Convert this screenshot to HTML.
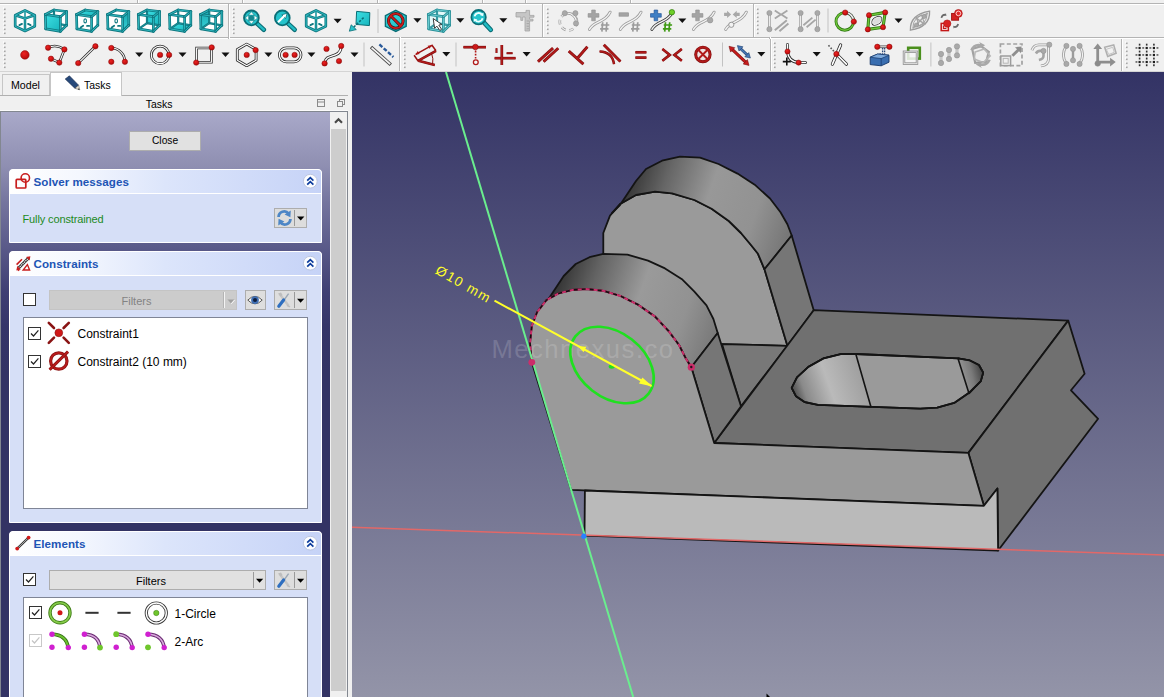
<!DOCTYPE html>
<html>
<head>
<meta charset="utf-8">
<title>FreeCAD</title>
<style>
html,body{margin:0;padding:0;}
body{width:1164px;height:697px;overflow:hidden;background:#f0f0f0;font-family:"Liberation Sans",sans-serif;font-size:12px;color:#000;position:relative;}
.abs{position:absolute;}
#tb1{position:absolute;left:0;top:0;width:1164px;height:38px;background:#f0f0f0;}
#tb2{position:absolute;left:0;top:38px;width:1164px;height:34px;background:#f0f0f0;}
#view{position:absolute;left:352px;top:72px;width:812px;height:625px;background:linear-gradient(to bottom,#333365 0%,#9394a8 100%);overflow:hidden;}
#panel{position:absolute;left:0;top:111px;width:348px;height:586px;background:#f0f0f0;}
#taskbg{position:absolute;left:1px;top:112px;width:329px;height:585px;background:linear-gradient(to bottom,#a9a9c9 0px,#8e8eb1 55px,#75759e 90px,#5a5a89 135px,#3f3f73 180px,#353568 215px,#333364 260px,#333364 100%);}
.grp{position:absolute;left:9px;width:313px;background:#d6dff7;border-radius:4px 4px 0 0;box-sizing:border-box;border:1px solid #fff;}
.grphead{position:absolute;left:-1px;top:-1px;width:313px;height:25px;box-sizing:border-box;border-radius:4px 4px 0 0;border:1px solid #fff;background:linear-gradient(to right,#ffffff 0%,#f4f7fe 22%,#dce5fb 50%,#c6d3f7 100%);}
.grphead .t{position:absolute;left:23.500px;top:5px;font-weight:bold;font-size:11.600px;letter-spacing:0.050px;color:#2154b5;white-space:nowrap;}
.lbl{font-size:11px;white-space:nowrap;}
.sx{display:inline-block;transform-origin:50% 50%;}
.list{position:absolute;background:#fff;border:1px solid #7f8596;}
.btn{position:absolute;background:#e1e1e1;border:1px solid #adadad;box-sizing:border-box;}
.cb{position:absolute;width:11px;height:11px;border:1px solid #333;background:#fff;}
</style>
</head>
<body>
<div id="tb1"></div>
<div id="tb2"></div>
<svg id="toolbar" class="abs" style="left:0;top:0;" width="1164" height="72">
<rect x="0" y="3" width="1164" height="1" fill="#b4b4b4"/><rect x="0" y="4" width="1164" height="1" fill="#ffffff"/>
<rect x="137" y="0" width="1" height="3" fill="#b4b4b4"/><rect x="138" y="0" width="1" height="3" fill="#ffffff"/>
<rect x="242" y="0" width="1" height="3" fill="#b4b4b4"/><rect x="243" y="0" width="1" height="3" fill="#ffffff"/>
<rect x="377" y="0" width="1" height="3" fill="#b4b4b4"/><rect x="378" y="0" width="1" height="3" fill="#ffffff"/>
<rect x="482" y="0" width="1" height="3" fill="#b4b4b4"/><rect x="483" y="0" width="1" height="3" fill="#ffffff"/>
<rect x="525" y="0" width="1" height="3" fill="#b4b4b4"/><rect x="526" y="0" width="1" height="3" fill="#ffffff"/>
<rect x="630" y="0" width="1" height="3" fill="#b4b4b4"/><rect x="631" y="0" width="1" height="3" fill="#ffffff"/>
<rect x="0" y="37" width="1164" height="1" fill="#b4b4b4"/><rect x="0" y="38" width="1164" height="1" fill="#ffffff"/>
<rect x="228" y="37" width="1" height="2" fill="#b4b4b4"/><rect x="229" y="37" width="1" height="2" fill="#ffffff"/>
<rect x="399" y="37" width="1" height="2" fill="#b4b4b4"/><rect x="400" y="37" width="1" height="2" fill="#ffffff"/>
<rect x="769" y="37" width="1" height="2" fill="#b4b4b4"/><rect x="770" y="37" width="1" height="2" fill="#ffffff"/>
<rect x="0" y="71" width="1164" height="1" fill="#d4d4d4"/>
<rect x="228" y="4" width="1" height="33" fill="#b4b4b4"/><rect x="229" y="4" width="1" height="33" fill="#ffffff"/>
<rect x="542" y="4" width="1" height="33" fill="#b4b4b4"/><rect x="543" y="4" width="1" height="33" fill="#ffffff"/>
<rect x="753" y="4" width="1" height="33" fill="#b4b4b4"/><rect x="754" y="4" width="1" height="33" fill="#ffffff"/>
<rect x="377.5" y="9" width="1" height="24" fill="#c2c2c2"/>
<rect x="399" y="39" width="1" height="32" fill="#b4b4b4"/><rect x="400" y="39" width="1" height="32" fill="#ffffff"/>
<rect x="770" y="39" width="1" height="32" fill="#b4b4b4"/><rect x="771" y="39" width="1" height="32" fill="#ffffff"/>
<rect x="1121" y="39" width="1" height="32" fill="#b4b4b4"/><rect x="1122" y="39" width="1" height="32" fill="#ffffff"/>
<rect x="4" y="8.5" width="1.6" height="1.6" fill="#a6a6a6"/><rect x="3" y="7.5" width="1.2" height="1.2" fill="#ffffff"/>
<rect x="4" y="12.5" width="1.6" height="1.6" fill="#a6a6a6"/><rect x="3" y="11.5" width="1.2" height="1.2" fill="#ffffff"/>
<rect x="4" y="16.5" width="1.6" height="1.6" fill="#a6a6a6"/><rect x="3" y="15.5" width="1.2" height="1.2" fill="#ffffff"/>
<rect x="4" y="20.5" width="1.6" height="1.6" fill="#a6a6a6"/><rect x="3" y="19.5" width="1.2" height="1.2" fill="#ffffff"/>
<rect x="4" y="24.5" width="1.6" height="1.6" fill="#a6a6a6"/><rect x="3" y="23.5" width="1.2" height="1.2" fill="#ffffff"/>
<rect x="4" y="28.5" width="1.6" height="1.6" fill="#a6a6a6"/><rect x="3" y="27.5" width="1.2" height="1.2" fill="#ffffff"/>
<rect x="4" y="32.5" width="1.6" height="1.6" fill="#a6a6a6"/><rect x="3" y="31.5" width="1.2" height="1.2" fill="#ffffff"/>
<rect x="233" y="8.5" width="1.6" height="1.6" fill="#a6a6a6"/><rect x="232" y="7.5" width="1.2" height="1.2" fill="#ffffff"/>
<rect x="233" y="12.5" width="1.6" height="1.6" fill="#a6a6a6"/><rect x="232" y="11.5" width="1.2" height="1.2" fill="#ffffff"/>
<rect x="233" y="16.5" width="1.6" height="1.6" fill="#a6a6a6"/><rect x="232" y="15.5" width="1.2" height="1.2" fill="#ffffff"/>
<rect x="233" y="20.5" width="1.6" height="1.6" fill="#a6a6a6"/><rect x="232" y="19.5" width="1.2" height="1.2" fill="#ffffff"/>
<rect x="233" y="24.5" width="1.6" height="1.6" fill="#a6a6a6"/><rect x="232" y="23.5" width="1.2" height="1.2" fill="#ffffff"/>
<rect x="233" y="28.5" width="1.6" height="1.6" fill="#a6a6a6"/><rect x="232" y="27.5" width="1.2" height="1.2" fill="#ffffff"/>
<rect x="233" y="32.5" width="1.6" height="1.6" fill="#a6a6a6"/><rect x="232" y="31.5" width="1.2" height="1.2" fill="#ffffff"/>
<rect x="547" y="8.5" width="1.6" height="1.6" fill="#a6a6a6"/><rect x="546" y="7.5" width="1.2" height="1.2" fill="#ffffff"/>
<rect x="547" y="12.5" width="1.6" height="1.6" fill="#a6a6a6"/><rect x="546" y="11.5" width="1.2" height="1.2" fill="#ffffff"/>
<rect x="547" y="16.5" width="1.6" height="1.6" fill="#a6a6a6"/><rect x="546" y="15.5" width="1.2" height="1.2" fill="#ffffff"/>
<rect x="547" y="20.5" width="1.6" height="1.6" fill="#a6a6a6"/><rect x="546" y="19.5" width="1.2" height="1.2" fill="#ffffff"/>
<rect x="547" y="24.5" width="1.6" height="1.6" fill="#a6a6a6"/><rect x="546" y="23.5" width="1.2" height="1.2" fill="#ffffff"/>
<rect x="547" y="28.5" width="1.6" height="1.6" fill="#a6a6a6"/><rect x="546" y="27.5" width="1.2" height="1.2" fill="#ffffff"/>
<rect x="547" y="32.5" width="1.6" height="1.6" fill="#a6a6a6"/><rect x="546" y="31.5" width="1.2" height="1.2" fill="#ffffff"/>
<rect x="757" y="8.5" width="1.6" height="1.6" fill="#a6a6a6"/><rect x="756" y="7.5" width="1.2" height="1.2" fill="#ffffff"/>
<rect x="757" y="12.5" width="1.6" height="1.6" fill="#a6a6a6"/><rect x="756" y="11.5" width="1.2" height="1.2" fill="#ffffff"/>
<rect x="757" y="16.5" width="1.6" height="1.6" fill="#a6a6a6"/><rect x="756" y="15.5" width="1.2" height="1.2" fill="#ffffff"/>
<rect x="757" y="20.5" width="1.6" height="1.6" fill="#a6a6a6"/><rect x="756" y="19.5" width="1.2" height="1.2" fill="#ffffff"/>
<rect x="757" y="24.5" width="1.6" height="1.6" fill="#a6a6a6"/><rect x="756" y="23.5" width="1.2" height="1.2" fill="#ffffff"/>
<rect x="757" y="28.5" width="1.6" height="1.6" fill="#a6a6a6"/><rect x="756" y="27.5" width="1.2" height="1.2" fill="#ffffff"/>
<rect x="757" y="32.5" width="1.6" height="1.6" fill="#a6a6a6"/><rect x="756" y="31.5" width="1.2" height="1.2" fill="#ffffff"/>
<rect x="4" y="42.5" width="1.6" height="1.6" fill="#a6a6a6"/><rect x="3" y="41.5" width="1.2" height="1.2" fill="#ffffff"/>
<rect x="4" y="46.5" width="1.6" height="1.6" fill="#a6a6a6"/><rect x="3" y="45.5" width="1.2" height="1.2" fill="#ffffff"/>
<rect x="4" y="50.5" width="1.6" height="1.6" fill="#a6a6a6"/><rect x="3" y="49.5" width="1.2" height="1.2" fill="#ffffff"/>
<rect x="4" y="54.5" width="1.6" height="1.6" fill="#a6a6a6"/><rect x="3" y="53.5" width="1.2" height="1.2" fill="#ffffff"/>
<rect x="4" y="58.5" width="1.6" height="1.6" fill="#a6a6a6"/><rect x="3" y="57.5" width="1.2" height="1.2" fill="#ffffff"/>
<rect x="4" y="62.5" width="1.6" height="1.6" fill="#a6a6a6"/><rect x="3" y="61.5" width="1.2" height="1.2" fill="#ffffff"/>
<rect x="4" y="66.5" width="1.6" height="1.6" fill="#a6a6a6"/><rect x="3" y="65.5" width="1.2" height="1.2" fill="#ffffff"/>
<rect x="404" y="42.5" width="1.6" height="1.6" fill="#a6a6a6"/><rect x="403" y="41.5" width="1.2" height="1.2" fill="#ffffff"/>
<rect x="404" y="46.5" width="1.6" height="1.6" fill="#a6a6a6"/><rect x="403" y="45.5" width="1.2" height="1.2" fill="#ffffff"/>
<rect x="404" y="50.5" width="1.6" height="1.6" fill="#a6a6a6"/><rect x="403" y="49.5" width="1.2" height="1.2" fill="#ffffff"/>
<rect x="404" y="54.5" width="1.6" height="1.6" fill="#a6a6a6"/><rect x="403" y="53.5" width="1.2" height="1.2" fill="#ffffff"/>
<rect x="404" y="58.5" width="1.6" height="1.6" fill="#a6a6a6"/><rect x="403" y="57.5" width="1.2" height="1.2" fill="#ffffff"/>
<rect x="404" y="62.5" width="1.6" height="1.6" fill="#a6a6a6"/><rect x="403" y="61.5" width="1.2" height="1.2" fill="#ffffff"/>
<rect x="404" y="66.5" width="1.6" height="1.6" fill="#a6a6a6"/><rect x="403" y="65.5" width="1.2" height="1.2" fill="#ffffff"/>
<rect x="774" y="42.5" width="1.6" height="1.6" fill="#a6a6a6"/><rect x="773" y="41.5" width="1.2" height="1.2" fill="#ffffff"/>
<rect x="774" y="46.5" width="1.6" height="1.6" fill="#a6a6a6"/><rect x="773" y="45.5" width="1.2" height="1.2" fill="#ffffff"/>
<rect x="774" y="50.5" width="1.6" height="1.6" fill="#a6a6a6"/><rect x="773" y="49.5" width="1.2" height="1.2" fill="#ffffff"/>
<rect x="774" y="54.5" width="1.6" height="1.6" fill="#a6a6a6"/><rect x="773" y="53.5" width="1.2" height="1.2" fill="#ffffff"/>
<rect x="774" y="58.5" width="1.6" height="1.6" fill="#a6a6a6"/><rect x="773" y="57.5" width="1.2" height="1.2" fill="#ffffff"/>
<rect x="774" y="62.5" width="1.6" height="1.6" fill="#a6a6a6"/><rect x="773" y="61.5" width="1.2" height="1.2" fill="#ffffff"/>
<rect x="774" y="66.5" width="1.6" height="1.6" fill="#a6a6a6"/><rect x="773" y="65.5" width="1.2" height="1.2" fill="#ffffff"/>
<rect x="1126" y="42.5" width="1.6" height="1.6" fill="#a6a6a6"/><rect x="1125" y="41.5" width="1.2" height="1.2" fill="#ffffff"/>
<rect x="1126" y="46.5" width="1.6" height="1.6" fill="#a6a6a6"/><rect x="1125" y="45.5" width="1.2" height="1.2" fill="#ffffff"/>
<rect x="1126" y="50.5" width="1.6" height="1.6" fill="#a6a6a6"/><rect x="1125" y="49.5" width="1.2" height="1.2" fill="#ffffff"/>
<rect x="1126" y="54.5" width="1.6" height="1.6" fill="#a6a6a6"/><rect x="1125" y="53.5" width="1.2" height="1.2" fill="#ffffff"/>
<rect x="1126" y="58.5" width="1.6" height="1.6" fill="#a6a6a6"/><rect x="1125" y="57.5" width="1.2" height="1.2" fill="#ffffff"/>
<rect x="1126" y="62.5" width="1.6" height="1.6" fill="#a6a6a6"/><rect x="1125" y="61.5" width="1.2" height="1.2" fill="#ffffff"/>
<rect x="1126" y="66.5" width="1.6" height="1.6" fill="#a6a6a6"/><rect x="1125" y="65.5" width="1.2" height="1.2" fill="#ffffff"/>
<defs><linearGradient id="cy" x1="0" y1="0" x2="1" y2="1"><stop offset="0" stop-color="#3fe0e4"/><stop offset="1" stop-color="#16b4bc"/></linearGradient><linearGradient id="cy2" x1="0" y1="0" x2="0" y2="1"><stop offset="0" stop-color="#1aa6ae"/><stop offset="1" stop-color="#36d2d8"/></linearGradient><radialGradient id="rd" cx="0.4" cy="0.35" r="0.7"><stop offset="0" stop-color="#ee2222"/><stop offset="1" stop-color="#b00808"/></radialGradient></defs>
<polygon points="25.0,10.4 34.8,15.3 34.8,26.3 25.0,31.0 15.2,26.3 15.2,15.3" fill="#ffffff" stroke="#0f7880" stroke-width="2.700" stroke-linejoin="round"/>
<path d="M15.2,15.299999999999999 L25,18.5 L34.8,15.299999999999999 M25,18.5 L25,31.0" fill="none" stroke="#0f7880" stroke-width="2.500"/>
<path d="M25,10.399999999999999 L25,18.5" fill="none" stroke="#1c98a0" stroke-width="1.600"/>
<polygon points="25.0,10.4 34.8,15.3 34.8,26.3 25.0,31.0 15.2,26.3 15.2,15.3" fill="none" stroke="#36c6ce" stroke-width="0.800" stroke-linejoin="round"/>
<path d="M15.2,15.299999999999999 L25,18.5 L34.8,15.299999999999999 M25,18.5 L25,31.0" fill="none" stroke="#36c6ce" stroke-width="0.700"/>
<path d="M19.4,25.1 l2.600,-1.200 M28,23.9 l2.600,1.200" stroke="#0f7880" stroke-width="1.800" stroke-linecap="round"/>
<polygon points="45.3,14.5 54.0,10.0 66.6,11.5 66.6,25.3 60.4,31.3 45.7,28.8" fill="#ffffff" stroke="#0b6e76" stroke-width="0" stroke-linejoin="round" />
<line x1="54.0" y1="10.0" x2="54.0" y2="23.1" stroke="#0f7880" stroke-width="2.2" stroke-linecap="round"/>
<line x1="54.0" y1="10.0" x2="54.0" y2="23.1" stroke="#36c6ce" stroke-width="0.30000000000000027" stroke-linecap="round"/>
<line x1="54.0" y1="23.1" x2="66.6" y2="25.3" stroke="#0f7880" stroke-width="2.2" stroke-linecap="round"/>
<line x1="54.0" y1="23.1" x2="66.6" y2="25.3" stroke="#36c6ce" stroke-width="0.30000000000000027" stroke-linecap="round"/>
<line x1="54.0" y1="23.1" x2="45.7" y2="28.8" stroke="#0f7880" stroke-width="2.2" stroke-linecap="round"/>
<line x1="54.0" y1="23.1" x2="45.7" y2="28.8" stroke="#36c6ce" stroke-width="0.30000000000000027" stroke-linecap="round"/>
<polygon points="45.3,14.5 60.4,16.7 60.4,31.3 45.7,28.8" fill="url(#cy)" stroke="#0b6e76" stroke-width="0" stroke-linejoin="round" />
<line x1="45.3" y1="14.5" x2="60.4" y2="16.7" stroke="#0f7880" stroke-width="2.7" stroke-linecap="round"/>
<line x1="45.3" y1="14.5" x2="60.4" y2="16.7" stroke="#36c6ce" stroke-width="0.8000000000000003" stroke-linecap="round"/>
<line x1="60.4" y1="16.7" x2="60.4" y2="31.3" stroke="#0f7880" stroke-width="2.7" stroke-linecap="round"/>
<line x1="60.4" y1="16.7" x2="60.4" y2="31.3" stroke="#36c6ce" stroke-width="0.8000000000000003" stroke-linecap="round"/>
<line x1="60.4" y1="31.3" x2="45.7" y2="28.8" stroke="#0f7880" stroke-width="2.7" stroke-linecap="round"/>
<line x1="60.4" y1="31.3" x2="45.7" y2="28.8" stroke="#36c6ce" stroke-width="0.8000000000000003" stroke-linecap="round"/>
<line x1="45.7" y1="28.8" x2="45.3" y2="14.5" stroke="#0f7880" stroke-width="2.7" stroke-linecap="round"/>
<line x1="45.7" y1="28.8" x2="45.3" y2="14.5" stroke="#36c6ce" stroke-width="0.8000000000000003" stroke-linecap="round"/>
<line x1="45.3" y1="14.5" x2="54.0" y2="10.0" stroke="#0f7880" stroke-width="2.7" stroke-linecap="round"/>
<line x1="45.3" y1="14.5" x2="54.0" y2="10.0" stroke="#36c6ce" stroke-width="0.8000000000000003" stroke-linecap="round"/>
<line x1="54.0" y1="10.0" x2="66.6" y2="11.5" stroke="#0f7880" stroke-width="2.7" stroke-linecap="round"/>
<line x1="54.0" y1="10.0" x2="66.6" y2="11.5" stroke="#36c6ce" stroke-width="0.8000000000000003" stroke-linecap="round"/>
<line x1="66.6" y1="11.5" x2="60.4" y2="16.7" stroke="#0f7880" stroke-width="2.7" stroke-linecap="round"/>
<line x1="66.6" y1="11.5" x2="60.4" y2="16.7" stroke="#36c6ce" stroke-width="0.8000000000000003" stroke-linecap="round"/>
<line x1="66.6" y1="11.5" x2="66.6" y2="25.3" stroke="#0f7880" stroke-width="2.7" stroke-linecap="round"/>
<line x1="66.6" y1="11.5" x2="66.6" y2="25.3" stroke="#36c6ce" stroke-width="0.8000000000000003" stroke-linecap="round"/>
<line x1="66.6" y1="25.3" x2="60.4" y2="31.3" stroke="#0f7880" stroke-width="2.7" stroke-linecap="round"/>
<line x1="66.6" y1="25.3" x2="60.4" y2="31.3" stroke="#36c6ce" stroke-width="0.8000000000000003" stroke-linecap="round"/>
<polygon points="76.5,14.5 85.2,10.0 97.8,11.5 97.8,25.3 91.6,31.3 76.9,28.8" fill="#ffffff" stroke="#0b6e76" stroke-width="0" stroke-linejoin="round" />
<polygon points="76.5,14.5 85.2,10.0 97.8,11.5 91.6,16.7" fill="url(#cy)" stroke="#0b6e76" stroke-width="0" stroke-linejoin="round" />
<line x1="76.5" y1="14.5" x2="91.6" y2="16.7" stroke="#0f7880" stroke-width="2.7" stroke-linecap="round"/>
<line x1="76.5" y1="14.5" x2="91.6" y2="16.7" stroke="#36c6ce" stroke-width="0.8000000000000003" stroke-linecap="round"/>
<line x1="91.6" y1="16.7" x2="91.6" y2="31.3" stroke="#0f7880" stroke-width="2.7" stroke-linecap="round"/>
<line x1="91.6" y1="16.7" x2="91.6" y2="31.3" stroke="#36c6ce" stroke-width="0.8000000000000003" stroke-linecap="round"/>
<line x1="91.6" y1="31.3" x2="76.9" y2="28.8" stroke="#0f7880" stroke-width="2.7" stroke-linecap="round"/>
<line x1="91.6" y1="31.3" x2="76.9" y2="28.8" stroke="#36c6ce" stroke-width="0.8000000000000003" stroke-linecap="round"/>
<line x1="76.9" y1="28.8" x2="76.5" y2="14.5" stroke="#0f7880" stroke-width="2.7" stroke-linecap="round"/>
<line x1="76.9" y1="28.8" x2="76.5" y2="14.5" stroke="#36c6ce" stroke-width="0.8000000000000003" stroke-linecap="round"/>
<line x1="76.5" y1="14.5" x2="85.2" y2="10.0" stroke="#0f7880" stroke-width="2.7" stroke-linecap="round"/>
<line x1="76.5" y1="14.5" x2="85.2" y2="10.0" stroke="#36c6ce" stroke-width="0.8000000000000003" stroke-linecap="round"/>
<line x1="85.2" y1="10.0" x2="97.8" y2="11.5" stroke="#0f7880" stroke-width="2.7" stroke-linecap="round"/>
<line x1="85.2" y1="10.0" x2="97.8" y2="11.5" stroke="#36c6ce" stroke-width="0.8000000000000003" stroke-linecap="round"/>
<line x1="97.8" y1="11.5" x2="91.6" y2="16.7" stroke="#0f7880" stroke-width="2.7" stroke-linecap="round"/>
<line x1="97.8" y1="11.5" x2="91.6" y2="16.7" stroke="#36c6ce" stroke-width="0.8000000000000003" stroke-linecap="round"/>
<line x1="97.8" y1="11.5" x2="97.8" y2="25.3" stroke="#0f7880" stroke-width="2.7" stroke-linecap="round"/>
<line x1="97.8" y1="11.5" x2="97.8" y2="25.3" stroke="#36c6ce" stroke-width="0.8000000000000003" stroke-linecap="round"/>
<line x1="97.8" y1="25.3" x2="91.6" y2="31.3" stroke="#0f7880" stroke-width="2.7" stroke-linecap="round"/>
<line x1="97.8" y1="25.3" x2="91.6" y2="31.3" stroke="#36c6ce" stroke-width="0.8000000000000003" stroke-linecap="round"/>
<path d="M80.6,27.5 l2.6,-1.800 M87.0,25.9 l2.200,0" stroke="#0f7880" stroke-width="1.700" stroke-linecap="round"/><ellipse cx="85.19999999999999" cy="20.9" rx="1.300" ry="2" fill="none" stroke="#0f7880" stroke-width="1.100"/>
<polygon points="107.5,14.5 116.2,10.0 128.8,11.5 128.8,25.3 122.6,31.3 107.9,28.8" fill="#ffffff" stroke="#0b6e76" stroke-width="0" stroke-linejoin="round" />
<polygon points="122.6,16.7 128.8,11.5 128.8,25.3 122.6,31.3" fill="url(#cy2)" stroke="#0b6e76" stroke-width="0" stroke-linejoin="round" />
<line x1="107.5" y1="14.5" x2="122.6" y2="16.7" stroke="#0f7880" stroke-width="2.7" stroke-linecap="round"/>
<line x1="107.5" y1="14.5" x2="122.6" y2="16.7" stroke="#36c6ce" stroke-width="0.8000000000000003" stroke-linecap="round"/>
<line x1="122.6" y1="16.7" x2="122.6" y2="31.3" stroke="#0f7880" stroke-width="2.7" stroke-linecap="round"/>
<line x1="122.6" y1="16.7" x2="122.6" y2="31.3" stroke="#36c6ce" stroke-width="0.8000000000000003" stroke-linecap="round"/>
<line x1="122.6" y1="31.3" x2="107.9" y2="28.8" stroke="#0f7880" stroke-width="2.7" stroke-linecap="round"/>
<line x1="122.6" y1="31.3" x2="107.9" y2="28.8" stroke="#36c6ce" stroke-width="0.8000000000000003" stroke-linecap="round"/>
<line x1="107.9" y1="28.8" x2="107.5" y2="14.5" stroke="#0f7880" stroke-width="2.7" stroke-linecap="round"/>
<line x1="107.9" y1="28.8" x2="107.5" y2="14.5" stroke="#36c6ce" stroke-width="0.8000000000000003" stroke-linecap="round"/>
<line x1="107.5" y1="14.5" x2="116.2" y2="10.0" stroke="#0f7880" stroke-width="2.7" stroke-linecap="round"/>
<line x1="107.5" y1="14.5" x2="116.2" y2="10.0" stroke="#36c6ce" stroke-width="0.8000000000000003" stroke-linecap="round"/>
<line x1="116.2" y1="10.0" x2="128.8" y2="11.5" stroke="#0f7880" stroke-width="2.7" stroke-linecap="round"/>
<line x1="116.2" y1="10.0" x2="128.8" y2="11.5" stroke="#36c6ce" stroke-width="0.8000000000000003" stroke-linecap="round"/>
<line x1="128.8" y1="11.5" x2="122.6" y2="16.7" stroke="#0f7880" stroke-width="2.7" stroke-linecap="round"/>
<line x1="128.8" y1="11.5" x2="122.6" y2="16.7" stroke="#36c6ce" stroke-width="0.8000000000000003" stroke-linecap="round"/>
<line x1="128.8" y1="11.5" x2="128.8" y2="25.3" stroke="#0f7880" stroke-width="2.7" stroke-linecap="round"/>
<line x1="128.8" y1="11.5" x2="128.8" y2="25.3" stroke="#36c6ce" stroke-width="0.8000000000000003" stroke-linecap="round"/>
<line x1="128.8" y1="25.3" x2="122.6" y2="31.3" stroke="#0f7880" stroke-width="2.7" stroke-linecap="round"/>
<line x1="128.8" y1="25.3" x2="122.6" y2="31.3" stroke="#36c6ce" stroke-width="0.8000000000000003" stroke-linecap="round"/>
<path d="M111.6,27.5 l2.6,-1.800 M118.0,25.9 l2.200,0" stroke="#0f7880" stroke-width="1.700" stroke-linecap="round"/><ellipse cx="116.19999999999999" cy="20.9" rx="1.300" ry="2" fill="none" stroke="#0f7880" stroke-width="1.100"/>
<polygon points="138.3,14.5 147.0,10.0 159.6,11.5 159.6,25.3 153.4,31.3 138.7,28.8" fill="#ffffff" stroke="#0b6e76" stroke-width="0" stroke-linejoin="round" />
<polygon points="147.0,10.0 159.6,11.5 159.6,25.3 147.0,23.1" fill="url(#cy)" stroke="#0b6e76" stroke-width="0" stroke-linejoin="round" />
<line x1="147.0" y1="10.0" x2="147.0" y2="23.1" stroke="#0f7880" stroke-width="2.2" stroke-linecap="round"/>
<line x1="147.0" y1="10.0" x2="147.0" y2="23.1" stroke="#36c6ce" stroke-width="0.30000000000000027" stroke-linecap="round"/>
<line x1="147.0" y1="23.1" x2="159.6" y2="25.3" stroke="#0f7880" stroke-width="2.2" stroke-linecap="round"/>
<line x1="147.0" y1="23.1" x2="159.6" y2="25.3" stroke="#36c6ce" stroke-width="0.30000000000000027" stroke-linecap="round"/>
<line x1="147.0" y1="23.1" x2="138.7" y2="28.8" stroke="#0f7880" stroke-width="2.2" stroke-linecap="round"/>
<line x1="147.0" y1="23.1" x2="138.7" y2="28.8" stroke="#36c6ce" stroke-width="0.30000000000000027" stroke-linecap="round"/>
<line x1="138.3" y1="14.5" x2="153.4" y2="16.7" stroke="#0f7880" stroke-width="2.7" stroke-linecap="round"/>
<line x1="138.3" y1="14.5" x2="153.4" y2="16.7" stroke="#36c6ce" stroke-width="0.8000000000000003" stroke-linecap="round"/>
<line x1="153.4" y1="16.7" x2="153.4" y2="31.3" stroke="#0f7880" stroke-width="2.7" stroke-linecap="round"/>
<line x1="153.4" y1="16.7" x2="153.4" y2="31.3" stroke="#36c6ce" stroke-width="0.8000000000000003" stroke-linecap="round"/>
<line x1="153.4" y1="31.3" x2="138.7" y2="28.8" stroke="#0f7880" stroke-width="2.7" stroke-linecap="round"/>
<line x1="153.4" y1="31.3" x2="138.7" y2="28.8" stroke="#36c6ce" stroke-width="0.8000000000000003" stroke-linecap="round"/>
<line x1="138.7" y1="28.8" x2="138.3" y2="14.5" stroke="#0f7880" stroke-width="2.7" stroke-linecap="round"/>
<line x1="138.7" y1="28.8" x2="138.3" y2="14.5" stroke="#36c6ce" stroke-width="0.8000000000000003" stroke-linecap="round"/>
<line x1="138.3" y1="14.5" x2="147.0" y2="10.0" stroke="#0f7880" stroke-width="2.7" stroke-linecap="round"/>
<line x1="138.3" y1="14.5" x2="147.0" y2="10.0" stroke="#36c6ce" stroke-width="0.8000000000000003" stroke-linecap="round"/>
<line x1="147.0" y1="10.0" x2="159.6" y2="11.5" stroke="#0f7880" stroke-width="2.7" stroke-linecap="round"/>
<line x1="147.0" y1="10.0" x2="159.6" y2="11.5" stroke="#36c6ce" stroke-width="0.8000000000000003" stroke-linecap="round"/>
<line x1="159.6" y1="11.5" x2="153.4" y2="16.7" stroke="#0f7880" stroke-width="2.7" stroke-linecap="round"/>
<line x1="159.6" y1="11.5" x2="153.4" y2="16.7" stroke="#36c6ce" stroke-width="0.8000000000000003" stroke-linecap="round"/>
<line x1="159.6" y1="11.5" x2="159.6" y2="25.3" stroke="#0f7880" stroke-width="2.7" stroke-linecap="round"/>
<line x1="159.6" y1="11.5" x2="159.6" y2="25.3" stroke="#36c6ce" stroke-width="0.8000000000000003" stroke-linecap="round"/>
<line x1="159.6" y1="25.3" x2="153.4" y2="31.3" stroke="#0f7880" stroke-width="2.7" stroke-linecap="round"/>
<line x1="159.6" y1="25.3" x2="153.4" y2="31.3" stroke="#36c6ce" stroke-width="0.8000000000000003" stroke-linecap="round"/>
<polygon points="169.5,14.5 178.2,10.0 190.8,11.5 190.8,25.3 184.6,31.3 169.9,28.8" fill="#ffffff" stroke="#0b6e76" stroke-width="0" stroke-linejoin="round" />
<polygon points="169.9,28.8 184.6,31.3 190.8,25.3 178.2,23.1" fill="url(#cy)" stroke="#0b6e76" stroke-width="0" stroke-linejoin="round" />
<line x1="178.2" y1="10.0" x2="178.2" y2="23.1" stroke="#0f7880" stroke-width="2.2" stroke-linecap="round"/>
<line x1="178.2" y1="10.0" x2="178.2" y2="23.1" stroke="#36c6ce" stroke-width="0.30000000000000027" stroke-linecap="round"/>
<line x1="178.2" y1="23.1" x2="190.8" y2="25.3" stroke="#0f7880" stroke-width="2.2" stroke-linecap="round"/>
<line x1="178.2" y1="23.1" x2="190.8" y2="25.3" stroke="#36c6ce" stroke-width="0.30000000000000027" stroke-linecap="round"/>
<line x1="178.2" y1="23.1" x2="169.9" y2="28.8" stroke="#0f7880" stroke-width="2.2" stroke-linecap="round"/>
<line x1="178.2" y1="23.1" x2="169.9" y2="28.8" stroke="#36c6ce" stroke-width="0.30000000000000027" stroke-linecap="round"/>
<line x1="169.5" y1="14.5" x2="184.6" y2="16.7" stroke="#0f7880" stroke-width="2.7" stroke-linecap="round"/>
<line x1="169.5" y1="14.5" x2="184.6" y2="16.7" stroke="#36c6ce" stroke-width="0.8000000000000003" stroke-linecap="round"/>
<line x1="184.6" y1="16.7" x2="184.6" y2="31.3" stroke="#0f7880" stroke-width="2.7" stroke-linecap="round"/>
<line x1="184.6" y1="16.7" x2="184.6" y2="31.3" stroke="#36c6ce" stroke-width="0.8000000000000003" stroke-linecap="round"/>
<line x1="184.6" y1="31.3" x2="169.9" y2="28.8" stroke="#0f7880" stroke-width="2.7" stroke-linecap="round"/>
<line x1="184.6" y1="31.3" x2="169.9" y2="28.8" stroke="#36c6ce" stroke-width="0.8000000000000003" stroke-linecap="round"/>
<line x1="169.9" y1="28.8" x2="169.5" y2="14.5" stroke="#0f7880" stroke-width="2.7" stroke-linecap="round"/>
<line x1="169.9" y1="28.8" x2="169.5" y2="14.5" stroke="#36c6ce" stroke-width="0.8000000000000003" stroke-linecap="round"/>
<line x1="169.5" y1="14.5" x2="178.2" y2="10.0" stroke="#0f7880" stroke-width="2.7" stroke-linecap="round"/>
<line x1="169.5" y1="14.5" x2="178.2" y2="10.0" stroke="#36c6ce" stroke-width="0.8000000000000003" stroke-linecap="round"/>
<line x1="178.2" y1="10.0" x2="190.8" y2="11.5" stroke="#0f7880" stroke-width="2.7" stroke-linecap="round"/>
<line x1="178.2" y1="10.0" x2="190.8" y2="11.5" stroke="#36c6ce" stroke-width="0.8000000000000003" stroke-linecap="round"/>
<line x1="190.8" y1="11.5" x2="184.6" y2="16.7" stroke="#0f7880" stroke-width="2.7" stroke-linecap="round"/>
<line x1="190.8" y1="11.5" x2="184.6" y2="16.7" stroke="#36c6ce" stroke-width="0.8000000000000003" stroke-linecap="round"/>
<line x1="190.8" y1="11.5" x2="190.8" y2="25.3" stroke="#0f7880" stroke-width="2.7" stroke-linecap="round"/>
<line x1="190.8" y1="11.5" x2="190.8" y2="25.3" stroke="#36c6ce" stroke-width="0.8000000000000003" stroke-linecap="round"/>
<line x1="190.8" y1="25.3" x2="184.6" y2="31.3" stroke="#0f7880" stroke-width="2.7" stroke-linecap="round"/>
<line x1="190.8" y1="25.3" x2="184.6" y2="31.3" stroke="#36c6ce" stroke-width="0.8000000000000003" stroke-linecap="round"/>
<polygon points="200.5,14.5 209.2,10.0 221.8,11.5 221.8,25.3 215.6,31.3 200.9,28.8" fill="#ffffff" stroke="#0b6e76" stroke-width="0" stroke-linejoin="round" />
<polygon points="200.5,14.5 209.2,10.0 209.2,23.1 200.9,28.8" fill="url(#cy2)" stroke="#0b6e76" stroke-width="0" stroke-linejoin="round" />
<line x1="209.2" y1="10.0" x2="209.2" y2="23.1" stroke="#0f7880" stroke-width="2.2" stroke-linecap="round"/>
<line x1="209.2" y1="10.0" x2="209.2" y2="23.1" stroke="#36c6ce" stroke-width="0.30000000000000027" stroke-linecap="round"/>
<line x1="209.2" y1="23.1" x2="221.8" y2="25.3" stroke="#0f7880" stroke-width="2.2" stroke-linecap="round"/>
<line x1="209.2" y1="23.1" x2="221.8" y2="25.3" stroke="#36c6ce" stroke-width="0.30000000000000027" stroke-linecap="round"/>
<line x1="209.2" y1="23.1" x2="200.9" y2="28.8" stroke="#0f7880" stroke-width="2.2" stroke-linecap="round"/>
<line x1="209.2" y1="23.1" x2="200.9" y2="28.8" stroke="#36c6ce" stroke-width="0.30000000000000027" stroke-linecap="round"/>
<line x1="200.5" y1="14.5" x2="215.6" y2="16.7" stroke="#0f7880" stroke-width="2.7" stroke-linecap="round"/>
<line x1="200.5" y1="14.5" x2="215.6" y2="16.7" stroke="#36c6ce" stroke-width="0.8000000000000003" stroke-linecap="round"/>
<line x1="215.6" y1="16.7" x2="215.6" y2="31.3" stroke="#0f7880" stroke-width="2.7" stroke-linecap="round"/>
<line x1="215.6" y1="16.7" x2="215.6" y2="31.3" stroke="#36c6ce" stroke-width="0.8000000000000003" stroke-linecap="round"/>
<line x1="215.6" y1="31.3" x2="200.9" y2="28.8" stroke="#0f7880" stroke-width="2.7" stroke-linecap="round"/>
<line x1="215.6" y1="31.3" x2="200.9" y2="28.8" stroke="#36c6ce" stroke-width="0.8000000000000003" stroke-linecap="round"/>
<line x1="200.9" y1="28.8" x2="200.5" y2="14.5" stroke="#0f7880" stroke-width="2.7" stroke-linecap="round"/>
<line x1="200.9" y1="28.8" x2="200.5" y2="14.5" stroke="#36c6ce" stroke-width="0.8000000000000003" stroke-linecap="round"/>
<line x1="200.5" y1="14.5" x2="209.2" y2="10.0" stroke="#0f7880" stroke-width="2.7" stroke-linecap="round"/>
<line x1="200.5" y1="14.5" x2="209.2" y2="10.0" stroke="#36c6ce" stroke-width="0.8000000000000003" stroke-linecap="round"/>
<line x1="209.2" y1="10.0" x2="221.8" y2="11.5" stroke="#0f7880" stroke-width="2.7" stroke-linecap="round"/>
<line x1="209.2" y1="10.0" x2="221.8" y2="11.5" stroke="#36c6ce" stroke-width="0.8000000000000003" stroke-linecap="round"/>
<line x1="221.8" y1="11.5" x2="215.6" y2="16.7" stroke="#0f7880" stroke-width="2.7" stroke-linecap="round"/>
<line x1="221.8" y1="11.5" x2="215.6" y2="16.7" stroke="#36c6ce" stroke-width="0.8000000000000003" stroke-linecap="round"/>
<line x1="221.8" y1="11.5" x2="221.8" y2="25.3" stroke="#0f7880" stroke-width="2.7" stroke-linecap="round"/>
<line x1="221.8" y1="11.5" x2="221.8" y2="25.3" stroke="#36c6ce" stroke-width="0.8000000000000003" stroke-linecap="round"/>
<line x1="221.8" y1="25.3" x2="215.6" y2="31.3" stroke="#0f7880" stroke-width="2.7" stroke-linecap="round"/>
<line x1="221.8" y1="25.3" x2="215.6" y2="31.3" stroke="#36c6ce" stroke-width="0.8000000000000003" stroke-linecap="round"/>
<line x1="256.4" y1="22.9" x2="263.8" y2="29.7" stroke="#0b6e76" stroke-width="4.6" stroke-linecap="round"/>
<line x1="256.4" y1="22.9" x2="263.8" y2="29.7" stroke="#22bcc4" stroke-width="2.4" stroke-linecap="round"/>
<circle cx="251.4" cy="17.9" r="7.4" fill="#25c3cb" stroke="#0b6e76" stroke-width="1.8"/>
<circle cx="251.4" cy="17.9" r="2.500" fill="#15858d"/>
<path d="M251.4,11.700 l2.800,3.400 h-5.600 Z M251.4,24.100 l2.800,-3.400 h-5.600 Z M245.200,17.9 l3.400,-2.800 v5.600 Z M257.600,17.9 l-3.400,-2.800 v5.600 Z" fill="#f0ffff" stroke="#0b6e76" stroke-width="0.500"/>
<line x1="287.3" y1="22.9" x2="294.7" y2="29.7" stroke="#0b6e76" stroke-width="4.6" stroke-linecap="round"/>
<line x1="287.3" y1="22.9" x2="294.7" y2="29.7" stroke="#22bcc4" stroke-width="2.4" stroke-linecap="round"/>
<circle cx="282.3" cy="17.9" r="7.4" fill="#25c3cb" stroke="#0b6e76" stroke-width="1.8"/>
<path d="M277.800,22.4 L283.600,16.6 L281.800,14.8 L287.200,13.2 L285.600,18.6 L283.800,16.8 Z" fill="#ffffff" stroke="#0b6e76" stroke-width="0.8" stroke-linejoin="round"/>
<line x1="278" y1="22.2" x2="284" y2="16.2" stroke="#ffffff" stroke-width="2.2"/>
<polygon points="316.0,10.4 325.8,15.3 325.8,26.3 316.0,31.0 306.2,26.3 306.2,15.3" fill="#ffffff" stroke="#0f7880" stroke-width="2.700" stroke-linejoin="round"/>
<path d="M306.2,15.299999999999999 L316,18.5 L325.8,15.299999999999999 M316,18.5 L316,31.0" fill="none" stroke="#0f7880" stroke-width="2.500"/>
<path d="M316,10.399999999999999 L316,18.5" fill="none" stroke="#1c98a0" stroke-width="1.600"/>
<polygon points="316.0,10.4 325.8,15.3 325.8,26.3 316.0,31.0 306.2,26.3 306.2,15.3" fill="none" stroke="#36c6ce" stroke-width="0.800" stroke-linejoin="round"/>
<path d="M306.2,15.299999999999999 L316,18.5 L325.8,15.299999999999999 M316,18.5 L316,31.0" fill="none" stroke="#36c6ce" stroke-width="0.700"/>
<path d="M310.4,25.1 l2.600,-1.200 M319,23.9 l2.600,1.200" stroke="#0f7880" stroke-width="1.800" stroke-linecap="round"/>
<path d="M333.6,18.8 L341.6,18.8 L337.6,23.3 Z" fill="#111"/>
<polygon points="356.6,11.4 369.8,12.6 369.4,25.6 356,24.4" fill="url(#cy)" stroke="#0b6e76" stroke-width="1"/>
<line x1="363.600" y1="17.6" x2="352.500" y2="28.4" stroke="#0b6e76" stroke-width="1.6" stroke-dasharray="2.4 1.4"/>
<path d="M349.300,31.2 L351.200,24.8 L356.300,29.6 Z" fill="#25c3cb" stroke="#0b6e76" stroke-width="0.8"/>
<polygon points="395.8,10.299999999999999 406.2,15.7 406.2,26.299999999999997 395.8,31.5 385.40000000000003,26.299999999999997 385.40000000000003,15.7" fill="url(#cy)" stroke="#0b6e76" stroke-width="1.400"/>
<circle cx="395.8" cy="20.9" r="7.3" fill="none" stroke="#3a1010" stroke-width="3"/>
<line x1="390.6" y1="15.7" x2="401.0" y2="26.099999999999998" stroke="#3a1010" stroke-width="3"/>
<circle cx="395.8" cy="20.9" r="7.3" fill="none" stroke="#c81c1c" stroke-width="1.900"/>
<line x1="390.6" y1="15.7" x2="401.0" y2="26.099999999999998" stroke="#c81c1c" stroke-width="1.900"/>
<path d="M413.4,18.2 L421.4,18.2 L417.4,22.7 Z" fill="#111"/>
<polygon points="428.3,14.5 437.0,10.0 449.6,11.5 449.6,25.3 443.4,31.3 428.7,28.8" fill="#e4fafb" stroke="#0b6e76" stroke-width="0" stroke-linejoin="round" />
<line x1="437.0" y1="10.0" x2="437.0" y2="23.1" stroke="#2a9098" stroke-width="2.2" stroke-linecap="round"/>
<line x1="437.0" y1="10.0" x2="437.0" y2="23.1" stroke="#7adde2" stroke-width="0.30000000000000027" stroke-linecap="round"/>
<line x1="437.0" y1="23.1" x2="449.6" y2="25.3" stroke="#2a9098" stroke-width="2.2" stroke-linecap="round"/>
<line x1="437.0" y1="23.1" x2="449.6" y2="25.3" stroke="#7adde2" stroke-width="0.30000000000000027" stroke-linecap="round"/>
<line x1="437.0" y1="23.1" x2="428.7" y2="28.8" stroke="#2a9098" stroke-width="2.2" stroke-linecap="round"/>
<line x1="437.0" y1="23.1" x2="428.7" y2="28.8" stroke="#7adde2" stroke-width="0.30000000000000027" stroke-linecap="round"/>
<line x1="428.3" y1="14.5" x2="443.4" y2="16.7" stroke="#2a9098" stroke-width="2.7" stroke-linecap="round"/>
<line x1="428.3" y1="14.5" x2="443.4" y2="16.7" stroke="#7adde2" stroke-width="0.8000000000000003" stroke-linecap="round"/>
<line x1="443.4" y1="16.7" x2="443.4" y2="31.3" stroke="#2a9098" stroke-width="2.7" stroke-linecap="round"/>
<line x1="443.4" y1="16.7" x2="443.4" y2="31.3" stroke="#7adde2" stroke-width="0.8000000000000003" stroke-linecap="round"/>
<line x1="443.4" y1="31.3" x2="428.7" y2="28.8" stroke="#2a9098" stroke-width="2.7" stroke-linecap="round"/>
<line x1="443.4" y1="31.3" x2="428.7" y2="28.8" stroke="#7adde2" stroke-width="0.8000000000000003" stroke-linecap="round"/>
<line x1="428.7" y1="28.8" x2="428.3" y2="14.5" stroke="#2a9098" stroke-width="2.7" stroke-linecap="round"/>
<line x1="428.7" y1="28.8" x2="428.3" y2="14.5" stroke="#7adde2" stroke-width="0.8000000000000003" stroke-linecap="round"/>
<line x1="428.3" y1="14.5" x2="437.0" y2="10.0" stroke="#2a9098" stroke-width="2.7" stroke-linecap="round"/>
<line x1="428.3" y1="14.5" x2="437.0" y2="10.0" stroke="#7adde2" stroke-width="0.8000000000000003" stroke-linecap="round"/>
<line x1="437.0" y1="10.0" x2="449.6" y2="11.5" stroke="#2a9098" stroke-width="2.7" stroke-linecap="round"/>
<line x1="437.0" y1="10.0" x2="449.6" y2="11.5" stroke="#7adde2" stroke-width="0.8000000000000003" stroke-linecap="round"/>
<line x1="449.6" y1="11.5" x2="443.4" y2="16.7" stroke="#2a9098" stroke-width="2.7" stroke-linecap="round"/>
<line x1="449.6" y1="11.5" x2="443.4" y2="16.7" stroke="#7adde2" stroke-width="0.8000000000000003" stroke-linecap="round"/>
<line x1="449.6" y1="11.5" x2="449.6" y2="25.3" stroke="#2a9098" stroke-width="2.7" stroke-linecap="round"/>
<line x1="449.6" y1="11.5" x2="449.6" y2="25.3" stroke="#7adde2" stroke-width="0.8000000000000003" stroke-linecap="round"/>
<line x1="449.6" y1="25.3" x2="443.4" y2="31.3" stroke="#2a9098" stroke-width="2.7" stroke-linecap="round"/>
<line x1="449.6" y1="25.3" x2="443.4" y2="31.3" stroke="#7adde2" stroke-width="0.8000000000000003" stroke-linecap="round"/>
<path d="M433.20000000000005,18.5 L434.6,28.299999999999997 L436.8,26.099999999999998 L439.8,30.5 L441.6,29.299999999999997 L438.8,25.099999999999998 L441.8,24.5 Z" fill="#ffffff" stroke="#3a3a3a" stroke-width="1" stroke-linejoin="round"/>
<path d="M456.3,18.2 L464.3,18.2 L460.3,22.7 Z" fill="#111"/>
<line x1="483.6" y1="22.2" x2="490.8" y2="29.799999999999997" stroke="#0b6e76" stroke-width="4.6" stroke-linecap="round"/>
<line x1="483.6" y1="22.2" x2="490.8" y2="29.799999999999997" stroke="#22bcc4" stroke-width="2.4" stroke-linecap="round"/>
<circle cx="478.6" cy="17.2" r="7.2" fill="#25c3cb" stroke="#0b6e76" stroke-width="1.8"/>
<path d="M474.6,16.4 a4.2,4.2 0 0 1 7.4,-1.800 M482.6,18.200 a4.200,4.200 0 0 1 -7.4,1.800" fill="none" stroke="#eaffff" stroke-width="1.8"/>
<path d="M483.600,12.6 l-0.400,3.600 l-3.400,-1.200 Z M473.600,22 l0.400,-3.600 l3.400,1.200 Z" fill="#eaffff"/>
<path d="M499.3,18.2 L507.3,18.2 L503.3,22.7 Z" fill="#111"/>
<path d="M516,12.6 h10 v-2.200 h3.600 v5 h4.400 v1.800 h-4.400 v2 h3.400 v1.800 h-3.400 v10 h-4.600 v-14 h-2.200 v3.400 h-2 v-3.400 h-4.800 Z" fill="#c6c6c6" stroke="#a2a2a2" stroke-width="0.8" stroke-linejoin="round"/>
<path d="M526.6,21 h2.400 M526.6,23.600 h2.400 M526.6,26.200 h2.400 M526.6,28.800 h2.400" stroke="#9a9a9a" stroke-width="0.7"/>
<circle cx="568.4" cy="21.8" r="8.6" fill="none" stroke="#9c9c9c" stroke-width="2.6" stroke-dasharray="4.5 3.6"/>
<circle cx="568.4" cy="21.8" r="8.6" fill="none" stroke="#f4f4f4" stroke-width="1.2" stroke-dasharray="4.5 3.6"/>
<path d="M564.8,13.8 A8.6,8.6 0 0 1 576.0,23.8" fill="none" stroke="#9c9c9c" stroke-width="2.6"/><path d="M564.8,13.8 A8.6,8.6 0 0 1 576.0,23.8" fill="none" stroke="#f4f4f4" stroke-width="1.2"/>
<circle cx="564.8" cy="13.200000000000001" r="2.6" fill="#a9a9a9" stroke="#8f8f8f" stroke-width="0.5"/>
<circle cx="575.4" cy="13.200000000000001" r="2.6" fill="#a9a9a9" stroke="#8f8f8f" stroke-width="0.5"/>
<circle cx="576.0" cy="23.400000000000002" r="2.6" fill="#a9a9a9" stroke="#8f8f8f" stroke-width="0.5"/>
<path d="M589.5,29.4 C594.5,19.8 604.5,23.8 610.1,12.200000000000001" fill="none" stroke="#9c9c9c" stroke-width="3" stroke-linecap="round"/><path d="M589.5,29.4 C594.5,19.8 604.5,23.8 610.1,12.200000000000001" fill="none" stroke="#f4f4f4" stroke-width="1.4" stroke-linecap="round"/>
<path d="M591.7,10.0 h3.600 v3.600 h3.600 v3.600 h-3.600 v3.600 h-3.600 v-3.600 h-3.600 v-3.600 h3.600 Z" fill="#a4a4a4" stroke="#8e8e8e" stroke-width="0.6"/>
<path d="M600.9,25.0 h8.4 M600.1,28.8 h8.4 M602.7,22.200000000000003 l-0.800,9.400 M606.9,22.200000000000003 l-0.800,9.400" stroke="#9c9c9c" stroke-width="1.7" fill="none"/>
<path d="M620.4,29.4 C625.4,19.8 635.4,23.8 641.0,12.200000000000001" fill="none" stroke="#9c9c9c" stroke-width="3" stroke-linecap="round"/><path d="M620.4,29.4 C625.4,19.8 635.4,23.8 641.0,12.200000000000001" fill="none" stroke="#f4f4f4" stroke-width="1.4" stroke-linecap="round"/>
<rect x="619.0" y="12.8" width="9.6" height="3.400" fill="#a4a4a4" stroke="#8e8e8e" stroke-width="0.6"/>
<path d="M631.8,25.0 h8.4 M631.0,28.8 h8.4 M633.6,22.200000000000003 l-0.800,9.400 M637.8,22.200000000000003 l-0.800,9.400" stroke="#9c9c9c" stroke-width="1.7" fill="none"/>
<path d="M651.9,29.4 C656.9,19.8 666.9,23.8 672.5,12.200000000000001" fill="none" stroke="#3a3a3a" stroke-width="3" stroke-linecap="round"/><path d="M651.9,29.4 C656.9,19.8 666.9,23.8 672.5,12.200000000000001" fill="none" stroke="#f4f4f4" stroke-width="1.4" stroke-linecap="round"/>
<path d="M654.1,10.0 h3.600 v3.600 h3.600 v3.600 h-3.600 v3.600 h-3.600 v-3.600 h-3.600 v-3.600 h3.600 Z" fill="#3f7fc4" stroke="#1f4f94" stroke-width="0.6"/>
<path d="M663.6999999999999,25.0 h8.4 M662.9,28.8 h8.4 M665.5,22.200000000000003 l-0.800,9.400 M669.6999999999999,22.200000000000003 l-0.800,9.400" stroke="#3f9a14" stroke-width="1.7" fill="none"/>
<circle cx="671.9" cy="12.200000000000001" r="2.7" fill="#6fd02a" stroke="#2f7a0a" stroke-width="0.7"/>
<path d="M678.3,18.6 L686.3,18.6 L682.3,23.1 Z" fill="#111"/>
<path d="M693.5,29.4 C698.5,19.8 708.5,23.8 714.1,12.200000000000001" fill="none" stroke="#9c9c9c" stroke-width="3" stroke-linecap="round"/><path d="M693.5,29.4 C698.5,19.8 708.5,23.8 714.1,12.200000000000001" fill="none" stroke="#f4f4f4" stroke-width="1.4" stroke-linecap="round"/>
<path d="M695.7,10.0 h3.600 v3.600 h3.600 v3.600 h-3.600 v3.600 h-3.600 v-3.600 h-3.600 v-3.600 h3.600 Z" fill="#a4a4a4" stroke="#8e8e8e" stroke-width="0.6"/>
<circle cx="710.1" cy="20.2" r="2.8" fill="#a9a9a9" stroke="#8f8f8f" stroke-width="0.5"/>
<path d="M725.7,29.4 C730.7,19.8 740.7,23.8 746.3000000000001,12.200000000000001" fill="none" stroke="#9c9c9c" stroke-width="3" stroke-linecap="round"/><path d="M725.7,29.4 C730.7,19.8 740.7,23.8 746.3000000000001,12.200000000000001" fill="none" stroke="#f4f4f4" stroke-width="1.4" stroke-linecap="round"/>
<path d="M724.1,12.8 h3 v-2 l4,3.600 l-4,3.600 v-2 h-3 Z M739.7,12.8 h-3 v-2 l-4,3.600 l4,3.600 v-2 h3 Z" fill="#a8a8a8"/>
<circle cx="731.3000000000001" cy="24.8" r="2.6" fill="#f2f2f2" stroke="#8e8e8e" stroke-width="0.9"/>
<line x1="769.4" y1="13.600000000000001" x2="769.4" y2="28.6" stroke="#9c9c9c" stroke-width="2.6"/><line x1="769.4" y1="13.600000000000001" x2="769.4" y2="28.6" stroke="#f4f4f4" stroke-width="1"/>
<circle cx="769.4" cy="13.000000000000002" r="2.6" fill="#a9a9a9" stroke="#8f8f8f" stroke-width="0.5"/>
<circle cx="769.4" cy="29.200000000000003" r="2.6" fill="#a9a9a9" stroke="#8f8f8f" stroke-width="0.5"/>
<path d="M774.8,10.600000000000001 l6,4 l-6,4 M787.4,10.600000000000001 l-6,4 l6,4" fill="none" stroke="#a6a6a6" stroke-width="1.8"/>
<path d="M774.8,30.200000000000003 l12,-10 M779.4,31.200000000000003 l9,-7.600" stroke="#a6a6a6" stroke-width="2"/>
<line x1="800.6" y1="13.600000000000001" x2="800.6" y2="28.6" stroke="#9c9c9c" stroke-width="2.6"/><line x1="800.6" y1="13.600000000000001" x2="800.6" y2="28.6" stroke="#f4f4f4" stroke-width="1"/>
<circle cx="800.6" cy="13.000000000000002" r="2.6" fill="#a9a9a9" stroke="#8f8f8f" stroke-width="0.5"/>
<circle cx="800.6" cy="29.200000000000003" r="2.6" fill="#a9a9a9" stroke="#8f8f8f" stroke-width="0.5"/>
<line x1="817.4" y1="13.600000000000001" x2="817.4" y2="28.6" stroke="#9c9c9c" stroke-width="2.6"/><line x1="817.4" y1="13.600000000000001" x2="817.4" y2="28.6" stroke="#f4f4f4" stroke-width="1"/>
<circle cx="817.4" cy="13.000000000000002" r="2.6" fill="#a9a9a9" stroke="#8f8f8f" stroke-width="0.5"/>
<circle cx="817.4" cy="29.200000000000003" r="2.6" fill="#a9a9a9" stroke="#8f8f8f" stroke-width="0.5"/>
<path d="M803.4,25.200000000000003 l9,-7.600 M806.6,27.200000000000003 l9,-7.600" stroke="#a6a6a6" stroke-width="1.8"/>
<rect x="827.5" y="8.5" width="1" height="24" fill="#c2c2c2"/>
<circle cx="844.8" cy="21.4" r="8.8" fill="none" stroke="#2f7a12" stroke-width="2.900"/><circle cx="844.8" cy="21.4" r="8.8" fill="none" stroke="#6fc43a" stroke-width="1.400"/>
<path d="M845.8,12.599999999999998 A8.8,8.8 0 0 1 853.5999999999999,21.4" fill="none" stroke="#555" stroke-width="2.900"/><path d="M845.8,12.599999999999998 A8.8,8.800 0 0 1 853.5999999999999,21.4" fill="none" stroke="#f2f2f2" stroke-width="1.500"/>
<circle cx="845.1999999999999" cy="12.599999999999998" r="2.7" fill="url(#rd)" stroke="#8c0a0a" stroke-width="0.5"/>
<circle cx="853.8" cy="21.599999999999998" r="2.7" fill="url(#rd)" stroke="#8c0a0a" stroke-width="0.5"/>
<polygon points="869.0,15.200000000000001 885.2,12.4 883.0,27.200000000000003 867.8000000000001,29.4" fill="#f4f4f4" stroke="#2f7a12" stroke-width="3.100" stroke-linejoin="round"/>
<polygon points="869.0,15.200000000000001 885.2,12.4 883.0,27.200000000000003 867.8000000000001,29.4" fill="none" stroke="#6fc43a" stroke-width="1.500" stroke-linejoin="round"/>
<path d="M872.6,23.2 q-0.500,-4 4,-5.600 q4,-1.600 4.400,0.800 q0.400,4 -4,5.600 q-4,1.600 -4.400,-0.800 Z" fill="#d8d8d8" stroke="#333" stroke-width="2.200"/><path d="M872.6,23.2 q-0.500,-4 4,-5.600 q4,-1.600 4.400,0.800 q0.400,4 -4,5.600 q-4,1.600 -4.400,-0.800 Z" fill="#dcdcdc" stroke="#fff" stroke-width="0.800"/>
<circle cx="869.0" cy="15.200000000000001" r="2.6" fill="url(#rd)" stroke="#8c0a0a" stroke-width="0.5"/>
<circle cx="885.2" cy="12.4" r="2.6" fill="url(#rd)" stroke="#8c0a0a" stroke-width="0.5"/>
<circle cx="883.0" cy="27.200000000000003" r="2.6" fill="url(#rd)" stroke="#8c0a0a" stroke-width="0.5"/>
<circle cx="867.8000000000001" cy="29.4" r="2.6" fill="url(#rd)" stroke="#8c0a0a" stroke-width="0.5"/>
<path d="M894.5,18.6 L902.5,18.6 L898.5,23.1 Z" fill="#111"/>
<path d="M910.400,30.200 Q909.600,14.600 929.600,11.200 Q930.400,26.800 910.400,30.200 Z" fill="#e6e6e6" stroke="#9a9a9a" stroke-width="1.300"/>
<path d="M913,27.600 Q912.600,16.600 927,13.800 Q927.400,24.800 913,27.600 Z" fill="#efefef" stroke="#a8a8a8" stroke-width="1"/>
<path d="M912.600,28.400 L927.600,13 M915.400,17.600 L925.400,24.600" stroke="#a6a6a6" stroke-width="1.500"/>
<polygon points="916.400,17.400 921.600,15 924.400,23.400 919,26" fill="none" stroke="#a2a2a2" stroke-width="1.100"/>
<circle cx="916.4" cy="25" r="2.1" fill="#a9a9a9" stroke="#8f8f8f" stroke-width="0.5"/>
<circle cx="924.2" cy="16.6" r="2.1" fill="#a9a9a9" stroke="#8f8f8f" stroke-width="0.5"/>
<rect x="951.6" y="13.400" width="7" height="6.800" fill="#d42020" stroke="#a00c0c" stroke-width="0.900"/>
<circle cx="958.4" cy="13.400" r="3.900" fill="#e02828" stroke="#a00c0c" stroke-width="0.600"/><circle cx="958.4" cy="13.400" r="2.300" fill="none" stroke="#ffd8d8" stroke-width="0.900"/>
<rect x="941.2" y="23.400" width="7.200" height="7.200" fill="#fbeaea" stroke="#c41818" stroke-width="1.500"/>
<path d="M943.400,25.400 v3 h3" fill="none" stroke="#c41818" stroke-width="1.100"/>
<circle cx="947.2" cy="23.600" r="3.700" fill="#d82222" stroke="#a00c0c" stroke-width="0.500"/>
<path d="M941.400,17.800 q0.600,-3 3.800,-3.200 M958.200,24 q-0.600,3 -3.800,3.200" fill="none" stroke="#6a6a6a" stroke-width="1.600"/>
<path d="M946,13.200 l0.400,2.800 l-2.600,-0.800 Z M953.600,28.600 l-0.400,-2.800 l2.600,0.800 Z" fill="#6a6a6a"/>
<circle cx="24.9" cy="54.9" r="4.3" fill="url(#rd)" stroke="#8c0a0a" stroke-width="0.5"/>
<path d="M48.1,47.7 Q56,43.600 64.4,49.4 L59.3,62.6 L51,58.7" fill="none" stroke="#2a2a2a" stroke-width="2.6" stroke-linecap="round"/>
<path d="M48.1,47.7 Q56,43.600 64.4,49.4 L59.3,62.6 L51,58.7" fill="none" stroke="#ffffff" stroke-width="1.1" stroke-linecap="round"/>
<circle cx="48.1" cy="47.7" r="2.7" fill="url(#rd)" stroke="#8c0a0a" stroke-width="0.5"/>
<circle cx="64.4" cy="49.4" r="2.7" fill="url(#rd)" stroke="#8c0a0a" stroke-width="0.5"/>
<circle cx="59.3" cy="62.6" r="2.7" fill="url(#rd)" stroke="#8c0a0a" stroke-width="0.5"/>
<circle cx="51" cy="58.7" r="2.7" fill="url(#rd)" stroke="#8c0a0a" stroke-width="0.5"/>
<line x1="78.2" y1="63.1" x2="95.4" y2="46.3" stroke="#2a2a2a" stroke-width="2.6" stroke-linecap="round"/>
<line x1="78.2" y1="63.1" x2="95.4" y2="46.3" stroke="#ffffff" stroke-width="1.1" stroke-linecap="round"/>
<circle cx="78.2" cy="63.1" r="2.7" fill="url(#rd)" stroke="#8c0a0a" stroke-width="0.5"/>
<circle cx="95.4" cy="46.3" r="2.7" fill="url(#rd)" stroke="#8c0a0a" stroke-width="0.5"/>
<path d="M111.3,48 A13.700,13.700 0 0 1 124.9,61.8" fill="none" stroke="#2a2a2a" stroke-width="2.6" stroke-linecap="round"/>
<path d="M111.3,48 A13.700,13.700 0 0 1 124.9,61.8" fill="none" stroke="#ffffff" stroke-width="1.1" stroke-linecap="round"/>
<circle cx="111.3" cy="48" r="2.7" fill="url(#rd)" stroke="#8c0a0a" stroke-width="0.5"/>
<circle cx="124.9" cy="61.8" r="2.7" fill="url(#rd)" stroke="#8c0a0a" stroke-width="0.5"/>
<circle cx="111.3" cy="61.8" r="2.7" fill="url(#rd)" stroke="#8c0a0a" stroke-width="0.5"/>
<path d="M135.2,52.6 L143.2,52.6 L139.2,57.1 Z" fill="#111"/>
<circle cx="160.1" cy="54.9" r="8.8" fill="none" stroke="#2a2a2a" stroke-width="2.8"/><circle cx="160.1" cy="54.9" r="8.8" fill="none" stroke="#fff" stroke-width="1.2"/>
<circle cx="160.1" cy="54.9" r="2.7" fill="url(#rd)" stroke="#8c0a0a" stroke-width="0.5"/>
<circle cx="169.1" cy="54.9" r="2.7" fill="url(#rd)" stroke="#8c0a0a" stroke-width="0.5"/>
<path d="M178.5,52.6 L186.5,52.6 L182.5,57.1 Z" fill="#111"/>
<path d="M196.6,48 H211.4 V62.2 H196.6 Z" fill="none" stroke="#2a2a2a" stroke-width="2.6" stroke-linecap="round"/>
<path d="M196.6,48 H211.4 V62.2 H196.6 Z" fill="none" stroke="#ffffff" stroke-width="1.1" stroke-linecap="round"/>
<circle cx="211.7" cy="47.4" r="2.7" fill="url(#rd)" stroke="#8c0a0a" stroke-width="0.5"/>
<circle cx="196.2" cy="62.6" r="2.7" fill="url(#rd)" stroke="#8c0a0a" stroke-width="0.5"/>
<path d="M221.5,52.5 L229.5,52.5 L225.5,57.0 Z" fill="#111"/>
<polygon points="246.7,44.099999999999994 256.09999999999997,49.5 256.09999999999997,60.3 246.7,65.7 237.29999999999998,60.3 237.29999999999998,49.5" fill="none" stroke="#2a2a2a" stroke-width="2.8" stroke-linejoin="round"/>
<polygon points="246.7,44.099999999999994 256.09999999999997,49.5 256.09999999999997,60.3 246.7,65.7 237.29999999999998,60.3 237.29999999999998,49.5" fill="none" stroke="#fff" stroke-width="1.2" stroke-linejoin="round"/>
<circle cx="246.7" cy="54.9" r="2.7" fill="url(#rd)" stroke="#8c0a0a" stroke-width="0.5"/>
<circle cx="255.6" cy="50.1" r="2.7" fill="url(#rd)" stroke="#8c0a0a" stroke-width="0.5"/>
<path d="M264.4,52.5 L272.4,52.5 L268.4,57.0 Z" fill="#111"/>
<rect x="279.4" y="47.9" width="21.6" height="14" rx="7" fill="none" stroke="#2a2a2a" stroke-width="2.8"/><rect x="279.4" y="47.9" width="21.600" height="14" rx="7" fill="none" stroke="#fff" stroke-width="1.2"/>
<circle cx="285.59999999999997" cy="54.9" r="2.7" fill="url(#rd)" stroke="#8c0a0a" stroke-width="0.5"/>
<circle cx="294.59999999999997" cy="54.9" r="2.7" fill="url(#rd)" stroke="#8c0a0a" stroke-width="0.5"/>
<path d="M307.4,52.5 L315.4,52.5 L311.4,57.0 Z" fill="#111"/>
<path d="M324.6,63.4 C325.600,52 340.600,60 341.2,46" fill="none" stroke="#2a2a2a" stroke-width="3.0" stroke-linecap="round"/>
<path d="M324.6,63.4 C325.600,52 340.600,60 341.2,46" fill="none" stroke="#ffffff" stroke-width="1.5" stroke-linecap="round"/>
<circle cx="324.6" cy="63.4" r="2.7" fill="url(#rd)" stroke="#8c0a0a" stroke-width="0.5"/>
<circle cx="326.5" cy="48.9" r="2.7" fill="url(#rd)" stroke="#8c0a0a" stroke-width="0.5"/>
<circle cx="339" cy="61.1" r="2.7" fill="url(#rd)" stroke="#8c0a0a" stroke-width="0.5"/>
<circle cx="341.2" cy="46" r="2.7" fill="url(#rd)" stroke="#8c0a0a" stroke-width="0.5"/>
<path d="M350.5,52.5 L358.5,52.5 L354.5,57.0 Z" fill="#111"/>
<rect x="363.5" y="42.5" width="1" height="24" fill="#c2c2c2"/>
<line x1="371" y1="47" x2="390.800" y2="64.800" stroke="#444" stroke-width="3.4"/><line x1="371.6" y1="47.6" x2="390.200" y2="64.200" stroke="#f4f4f4" stroke-width="1.8"/>
<line x1="379.4" y1="44.400" x2="393.400" y2="57" stroke="#2a5a9a" stroke-width="2.4" stroke-dasharray="4 1.8"/>
<line x1="418.4" y1="60.7" x2="436" y2="50.9" stroke="#7c0e0e" stroke-width="2.5" stroke-linecap="butt"/><line x1="418.4" y1="60.7" x2="436" y2="50.9" stroke="#b11a1a" stroke-width="1.4" stroke-linecap="butt"/>
<line x1="418.4" y1="60.7" x2="434.8" y2="65" stroke="#7c0e0e" stroke-width="2.5" stroke-linecap="butt"/><line x1="418.4" y1="60.7" x2="434.8" y2="65" stroke="#b11a1a" stroke-width="1.4" stroke-linecap="butt"/>
<path d="M414.100,55.200 L418.300,61.300 M431.600,44.800 L436,50.800 M415.800,54.400 L431.400,45.600" stroke="#9c1212" stroke-width="1.500" fill="none"/>
<path d="M415.200,54.700 l4.400,-0.600 l-1.800,-3 Z M432,45.200 l-4.400,0.600 l1.800,3 Z" fill="#b01616"/>
<path d="M431.600,53.600 Q433.600,58.600 432.600,64" stroke="#8a1010" stroke-width="1" fill="none"/>
<path d="M442.3,52 L450.3,52 L446.3,56.5 Z" fill="#111"/>
<rect x="455.5" y="42.5" width="1" height="24" fill="#c2c2c2"/>
<line x1="463.4" y1="47.2" x2="486" y2="47.2" stroke="#7c0e0e" stroke-width="2.7" stroke-linecap="butt"/><line x1="463.4" y1="47.2" x2="486" y2="47.2" stroke="#b11a1a" stroke-width="1.6" stroke-linecap="butt"/>
<circle cx="475.4" cy="47" r="2.8" fill="#d01818" stroke="#7c0e0e" stroke-width="0.6"/>
<line x1="475.6" y1="50.600" x2="475.600" y2="58.600" stroke="#b11a1a" stroke-width="1.6" stroke-dasharray="1.8 1.4"/>
<circle cx="475.8" cy="62.2" r="2.4" fill="#f8f8f8" stroke="#b11a1a" stroke-width="1.3"/>
<line x1="494.6" y1="58.2" x2="515.6" y2="58.2" stroke="#7c0e0e" stroke-width="2.7" stroke-linecap="butt"/><line x1="494.6" y1="58.2" x2="515.6" y2="58.2" stroke="#b11a1a" stroke-width="1.6" stroke-linecap="butt"/>
<line x1="501.8" y1="45" x2="501.8" y2="65" stroke="#7c0e0e" stroke-width="2.7" stroke-linecap="butt"/><line x1="501.8" y1="45" x2="501.8" y2="65" stroke="#b11a1a" stroke-width="1.6" stroke-linecap="butt"/>
<line x1="496.5" y1="48.2" x2="496.5" y2="53" stroke="#7c0e0e" stroke-width="2.1" stroke-linecap="butt"/><line x1="496.5" y1="48.2" x2="496.5" y2="53" stroke="#b11a1a" stroke-width="1.0" stroke-linecap="butt"/>
<line x1="506.6" y1="53.2" x2="512.6" y2="53.2" stroke="#7c0e0e" stroke-width="2.1" stroke-linecap="butt"/><line x1="506.6" y1="53.2" x2="512.6" y2="53.2" stroke="#b11a1a" stroke-width="1.0" stroke-linecap="butt"/>
<path d="M522.6,52 L530.6,52 L526.6,56.5 Z" fill="#111"/>
<line x1="538" y1="61.6" x2="553" y2="48.2" stroke="#7c0e0e" stroke-width="2.9" stroke-linecap="butt"/><line x1="538" y1="61.6" x2="553" y2="48.2" stroke="#b11a1a" stroke-width="1.7999999999999998" stroke-linecap="butt"/>
<line x1="543.6" y1="61.6" x2="558.2" y2="48.2" stroke="#7c0e0e" stroke-width="2.9" stroke-linecap="butt"/><line x1="543.6" y1="61.6" x2="558.2" y2="48.2" stroke="#b11a1a" stroke-width="1.7999999999999998" stroke-linecap="butt"/>
<line x1="568.8" y1="51.2" x2="583.4" y2="64.2" stroke="#7c0e0e" stroke-width="2.9" stroke-linecap="butt"/><line x1="568.8" y1="51.2" x2="583.4" y2="64.2" stroke="#b11a1a" stroke-width="1.7999999999999998" stroke-linecap="butt"/>
<line x1="577.8" y1="57.8" x2="587.4" y2="46.8" stroke="#7c0e0e" stroke-width="2.9" stroke-linecap="butt"/><line x1="577.8" y1="57.8" x2="587.4" y2="46.8" stroke="#b11a1a" stroke-width="1.7999999999999998" stroke-linecap="butt"/>
<line x1="603.8" y1="44.8" x2="620.4" y2="61.6" stroke="#7c0e0e" stroke-width="2.9" stroke-linecap="butt"/><line x1="603.8" y1="44.8" x2="620.4" y2="61.6" stroke="#b11a1a" stroke-width="1.7999999999999998" stroke-linecap="butt"/>
<path d="M599.6,51.4 Q612.600,52 614,64.200" fill="none" stroke="#7c0e0e" stroke-width="2.5" stroke-linejoin="miter" /><path d="M599.6,51.4 Q612.600,52 614,64.200" fill="none" stroke="#b11a1a" stroke-width="1.4" stroke-linejoin="miter" />
<line x1="635.4" y1="52.3" x2="646.4" y2="52.3" stroke="#7c0e0e" stroke-width="2.7" stroke-linecap="butt"/><line x1="635.4" y1="52.3" x2="646.4" y2="52.3" stroke="#b11a1a" stroke-width="1.6" stroke-linecap="butt"/>
<line x1="635.4" y1="57.6" x2="646.4" y2="57.6" stroke="#7c0e0e" stroke-width="2.7" stroke-linecap="butt"/><line x1="635.4" y1="57.6" x2="646.4" y2="57.6" stroke="#b11a1a" stroke-width="1.6" stroke-linecap="butt"/>
<path d="M662.4,49 L669.800,54.9 L662.4,60.8" fill="none" stroke="#7c0e0e" stroke-width="2.7" stroke-linejoin="miter" /><path d="M662.4,49 L669.800,54.9 L662.4,60.8" fill="none" stroke="#b11a1a" stroke-width="1.6" stroke-linejoin="miter" />
<path d="M681.800,49 L674.400,54.9 L681.800,60.8" fill="none" stroke="#7c0e0e" stroke-width="2.7" stroke-linejoin="miter" /><path d="M681.800,49 L674.400,54.9 L681.800,60.8" fill="none" stroke="#b11a1a" stroke-width="1.6" stroke-linejoin="miter" />
<circle cx="702.9" cy="54.5" r="7.2" fill="#f0e4e4" stroke="#7c0e0e" stroke-width="3"/><circle cx="702.9" cy="54.5" r="7.2" fill="none" stroke="#b11a1a" stroke-width="2"/>
<path d="M698.4,50 L707.400,59 M707.400,50 L698.400,59" stroke="#b11a1a" stroke-width="1.9"/>
<rect x="722" y="42.5" width="1" height="24" fill="#c2c2c2"/>
<line x1="731.400" y1="48.600" x2="746.600" y2="63.200" stroke="#7c0e0e" stroke-width="3"/><line x1="731.400" y1="48.600" x2="746.600" y2="63.200" stroke="#c81c1c" stroke-width="1.8"/>
<path d="M729,46.300 l5.800,1.400 l-4.200,4.400 Z M749,65.400 l-5.800,-1.400 l4.200,-4.400 Z" fill="#c81c1c" stroke="#7c0e0e" stroke-width="0.6"/>
<line x1="739.600" y1="47.800" x2="748.400" y2="56" stroke="#1c3c6c" stroke-width="2.8"/><line x1="739.600" y1="47.800" x2="748.400" y2="56" stroke="#4a7ab8" stroke-width="1.6"/>
<path d="M737.400,45.600 l5.600,1.200 l-4,4.200 Z M750.400,58 l-5.600,-1.200 l4,-4.200 Z" fill="#4a7ab8" stroke="#1c3c6c" stroke-width="0.6"/>
<path d="M757.3,52 L765.3,52 L761.3,56.5 Z" fill="#111"/>
<line x1="787.5" y1="44.4" x2="787.5" y2="51.5" stroke="#2a2a2a" stroke-width="3.0" stroke-linecap="round"/>
<line x1="787.5" y1="44.4" x2="787.5" y2="51.5" stroke="#ffffff" stroke-width="1.5" stroke-linecap="round"/>
<path d="M787.5,51.5 Q788.400,61.800 798.6,62.6" fill="none" stroke="#2a2a2a" stroke-width="3.0" stroke-linecap="round"/>
<path d="M787.5,51.5 Q788.400,61.800 798.6,62.6" fill="none" stroke="#ffffff" stroke-width="1.5" stroke-linecap="round"/>
<line x1="798.6" y1="62.6" x2="805.4" y2="62.6" stroke="#2a2a2a" stroke-width="3.0" stroke-linecap="round"/>
<line x1="798.6" y1="62.6" x2="805.4" y2="62.6" stroke="#ffffff" stroke-width="1.5" stroke-linecap="round"/>
<circle cx="787.5" cy="51.5" r="2.6" fill="url(#rd)" stroke="#8c0a0a" stroke-width="0.5"/>
<circle cx="798.6" cy="62.6" r="2.6" fill="url(#rd)" stroke="#8c0a0a" stroke-width="0.5"/>
<path d="M786.800,57.600 v8 M782.800,61.600 h8" stroke="#111" stroke-width="1.6"/>
<path d="M812.7,52 L820.7,52 L816.7,56.5 Z" fill="#111"/>
<line x1="836" y1="53.600" x2="828.200" y2="45" stroke="#555" stroke-width="1.6" stroke-dasharray="1.6 1.6"/>
<line x1="840.6" y1="45" x2="832.4" y2="64.2" stroke="#2a2a2a" stroke-width="3.2" stroke-linecap="round"/>
<line x1="840.6" y1="45" x2="832.4" y2="64.2" stroke="#ffffff" stroke-width="1.7000000000000002" stroke-linecap="round"/>
<line x1="836.4" y1="54" x2="846.4" y2="64.2" stroke="#2a2a2a" stroke-width="3.2" stroke-linecap="round"/>
<line x1="836.4" y1="54" x2="846.4" y2="64.2" stroke="#ffffff" stroke-width="1.7000000000000002" stroke-linecap="round"/>
<circle cx="836.4" cy="54" r="2.7" fill="url(#rd)" stroke="#8c0a0a" stroke-width="0.5"/>
<path d="M855.6,52 L863.6,52 L859.6,56.5 Z" fill="#111"/>
<line x1="877.300" y1="46.800" x2="889.400" y2="46.800" stroke="#444" stroke-width="2.6"/><line x1="877.300" y1="46.800" x2="889.400" y2="46.800" stroke="#eee" stroke-width="1.100"/>
<path d="M882.600,48 v6 h-3 M884.600,48 v6" stroke="#2a4a7a" stroke-width="1.3" fill="none" stroke-dasharray="1.600 1"/>
<polygon points="870.200,57.200 877.600,54 889,55.200 889,62.200 881.200,65.800 870.200,64.600" fill="#3a6eb0" stroke="#16386a" stroke-width="0.9"/>
<polygon points="870.200,57.200 877.600,54 889,55.200 881.200,58.600" fill="#7eaadc" stroke="#16386a" stroke-width="0.7"/>
<line x1="881.200" y1="58.600" x2="881.200" y2="65.800" stroke="#16386a" stroke-width="0.7"/>
<circle cx="877.3" cy="46.8" r="2.7" fill="url(#rd)" stroke="#8c0a0a" stroke-width="0.5"/>
<circle cx="889.4" cy="46.8" r="2.7" fill="url(#rd)" stroke="#8c0a0a" stroke-width="0.5"/>
<rect x="908.200" y="47.800" width="11.600" height="10.800" fill="#f4f4f4" stroke="#4a8f1c" stroke-width="2.600"/>
<rect x="904" y="51.800" width="13" height="11.800" fill="#f6f6f6" fill-opacity="0.85" stroke="#8a8a8a" stroke-width="2.400"/><rect x="904" y="51.800" width="13" height="11.800" fill="none" stroke="#e6e6e6" stroke-width="0.900"/>
<rect x="930.4" y="42.5" width="1" height="24" fill="#c2c2c2"/>
<line x1="941" y1="54" x2="941" y2="63" stroke="#9c9c9c" stroke-width="2.6"/><line x1="941" y1="54" x2="941" y2="63" stroke="#f2f2f2" stroke-width="1"/>
<circle cx="941" cy="54" r="2.7" fill="#a9a9a9" stroke="#8f8f8f" stroke-width="0.5"/>
<circle cx="941" cy="63" r="2.7" fill="#a9a9a9" stroke="#8f8f8f" stroke-width="0.5"/>
<line x1="949" y1="50" x2="949" y2="59" stroke="#9c9c9c" stroke-width="2.6"/><line x1="949" y1="50" x2="949" y2="59" stroke="#f2f2f2" stroke-width="1"/>
<circle cx="949" cy="50" r="2.7" fill="#a9a9a9" stroke="#8f8f8f" stroke-width="0.5"/>
<circle cx="949" cy="59" r="2.7" fill="#a9a9a9" stroke="#8f8f8f" stroke-width="0.5"/>
<line x1="957" y1="46.4" x2="957" y2="55.4" stroke="#9c9c9c" stroke-width="2.6"/><line x1="957" y1="46.4" x2="957" y2="55.4" stroke="#f2f2f2" stroke-width="1"/>
<circle cx="957" cy="46.4" r="2.7" fill="#a9a9a9" stroke="#8f8f8f" stroke-width="0.5"/>
<circle cx="957" cy="55.4" r="2.7" fill="#a9a9a9" stroke="#8f8f8f" stroke-width="0.5"/>
<polygon points="972.2,48.9 981.2,46.3 988.8000000000001,51.9 986.2,61.9 975.2,62.9" fill="none" stroke="#a2a2a2" stroke-width="2.2"/>
<polygon points="975.2,51.9 984.2,48.9 990.2,55.9 983.2,62.5 974.2,58.9" fill="none" stroke="#b8b8b8" stroke-width="1.6"/>
<path d="M970.2,49.9 q3,-7 10,-6 l-1,-2 l6,3.400 l-6,3 l0.600,-2 q-5,-0.600 -7,4 Z M990.8000000000001,59.9 q-3,7 -10,6 l1,2 l-6,-3.400 l6,-3 l-0.600,2 q5,0.600 7,-4 Z" fill="#a8a8a8"/>
<rect x="1000.400" y="44" width="21.600" height="21.600" fill="none" stroke="#a2a2a2" stroke-width="1.700" stroke-dasharray="4 2.4"/>
<rect x="1000.800" y="56" width="9.800" height="9.600" fill="#f0f0f0" stroke="#9c9c9c" stroke-width="1.500"/><rect x="1003.200" y="58.400" width="5" height="4.800" fill="none" stroke="#b4b4b4" stroke-width="1"/>
<path d="M1011.400,54.800 l5.600,-5.600 l-2,-2 l6.600,-0.600 l-0.600,6.600 l-2,-2 l-5.600,5.600 Z" fill="#8e8e8e"/>
<path d="M1031.9,50.3 q2,-5.400 7,-5.400 h9.600 v14 q0,6 -7.600,7" fill="none" stroke="#9c9c9c" stroke-width="2.800"/><path d="M1031.9,50.3 q2,-5.400 7,-5.400 h9.600 v14 q0,6 -7.600,7" fill="none" stroke="#f2f2f2" stroke-width="1.200"/>
<path d="M1035.9,53.5 q1.600,-2.600 4,-2.600 h3.600 v5 q0,3 -4.600,4" fill="none" stroke="#a4a4a4" stroke-width="2.600"/>
<circle cx="1049.3" cy="44.7" r="2.6" fill="#a9a9a9" stroke="#8f8f8f" stroke-width="0.5"/>
<circle cx="1043.5" cy="50.9" r="2.6" fill="#a9a9a9" stroke="#8f8f8f" stroke-width="0.5"/>
<path d="M1066.4,45.9 q-6,9 0,18 M1079.6,45.9 q6,9 0,18" fill="none" stroke="#9c9c9c" stroke-width="2.800"/><path d="M1066.4,45.9 q-6,9 0,18 M1079.6,45.9 q6,9 0,18" fill="none" stroke="#f2f2f2" stroke-width="1.200"/>
<line x1="1073" y1="48.9" x2="1073" y2="59.9" stroke="#9c9c9c" stroke-width="2.400"/>
<circle cx="1066.4" cy="45.9" r="2.6" fill="#a9a9a9" stroke="#8f8f8f" stroke-width="0.5"/>
<circle cx="1066.4" cy="63.9" r="2.6" fill="#a9a9a9" stroke="#8f8f8f" stroke-width="0.5"/>
<circle cx="1079.6" cy="45.9" r="2.6" fill="#a9a9a9" stroke="#8f8f8f" stroke-width="0.5"/>
<circle cx="1079.6" cy="63.9" r="2.6" fill="#a9a9a9" stroke="#8f8f8f" stroke-width="0.5"/>
<circle cx="1073" cy="48.9" r="2.6" fill="#a9a9a9" stroke="#8f8f8f" stroke-width="0.5"/>
<circle cx="1073" cy="60.3" r="2.6" fill="#a9a9a9" stroke="#8f8f8f" stroke-width="0.5"/>
<polygon points="1104.7,47.3 1113.7,44.9 1116.1000000000001,53.3 1107.7,56.5" fill="#f2f2f2" stroke="#b0b0b0" stroke-width="1.600"/>
<polygon points="1106.3,49.3 1112.7,47.3 1114.3,52.3 1108.7,54.5" fill="none" stroke="#c4c4c4" stroke-width="1"/>
<path d="M1096.3,63.5 v-14.600 h-3 l4.400,-5.400 l4.400,5.400 h-3 v11.800 h11 v-3 l5.600,4.400 l-5.600,4.400 v-3 Z" fill="#8e8e8e"/>
<circle cx="1097.7" cy="63.5" r="2.8" fill="#8a8a8a" stroke="#8f8f8f" stroke-width="0.5"/>
<rect x="1138.8" y="43.7" width="1.600" height="1.900" fill="#333"/>
<rect x="1138.8" y="50.6" width="1.600" height="1.900" fill="#333"/>
<rect x="1138.8" y="57.6" width="1.600" height="1.900" fill="#333"/>
<rect x="1138.8" y="64.3" width="1.600" height="1.900" fill="#333"/>
<rect x="1145.9" y="43.7" width="1.600" height="1.900" fill="#333"/>
<rect x="1145.9" y="50.6" width="1.600" height="1.900" fill="#333"/>
<rect x="1145.9" y="57.6" width="1.600" height="1.900" fill="#333"/>
<rect x="1145.9" y="64.3" width="1.600" height="1.900" fill="#333"/>
<rect x="1153.1000000000001" y="43.7" width="1.600" height="1.900" fill="#333"/>
<rect x="1153.1000000000001" y="50.6" width="1.600" height="1.900" fill="#333"/>
<rect x="1153.1000000000001" y="57.6" width="1.600" height="1.900" fill="#333"/>
<rect x="1153.1000000000001" y="64.3" width="1.600" height="1.900" fill="#333"/>
<rect x="1135.5" y="47.2" width="1.900" height="1.500" fill="#555"/>
<rect x="1142.25" y="47.2" width="1.900" height="1.500" fill="#555"/>
<rect x="1149.3999999999999" y="47.2" width="1.900" height="1.500" fill="#555"/>
<rect x="1156.5" y="47.2" width="1.900" height="1.500" fill="#555"/>
<rect x="1135.5" y="54.2" width="1.900" height="1.500" fill="#555"/>
<rect x="1142.25" y="54.2" width="1.900" height="1.500" fill="#555"/>
<rect x="1149.3999999999999" y="54.2" width="1.900" height="1.500" fill="#555"/>
<rect x="1156.5" y="54.2" width="1.900" height="1.500" fill="#555"/>
<rect x="1135.5" y="61.2" width="1.900" height="1.500" fill="#555"/>
<rect x="1142.25" y="61.2" width="1.900" height="1.500" fill="#555"/>
<rect x="1149.3999999999999" y="61.2" width="1.900" height="1.500" fill="#555"/>
<rect x="1156.5" y="61.2" width="1.900" height="1.500" fill="#555"/>
<rect x="1138.5" y="46.9" width="2.200" height="2.200" fill="#1c1c1c"/>
<rect x="1138.5" y="53.9" width="2.200" height="2.200" fill="#1c1c1c"/>
<rect x="1138.5" y="60.9" width="2.200" height="2.200" fill="#1c1c1c"/>
<rect x="1145.6000000000001" y="46.9" width="2.200" height="2.200" fill="#1c1c1c"/>
<rect x="1145.6000000000001" y="53.9" width="2.200" height="2.200" fill="#1c1c1c"/>
<rect x="1145.6000000000001" y="60.9" width="2.200" height="2.200" fill="#1c1c1c"/>
<rect x="1152.8000000000002" y="46.9" width="2.200" height="2.200" fill="#1c1c1c"/>
<rect x="1152.8000000000002" y="53.9" width="2.200" height="2.200" fill="#1c1c1c"/>
<rect x="1152.8000000000002" y="60.9" width="2.200" height="2.200" fill="#1c1c1c"/>

</svg>

<!-- tabs -->
<div class="abs" style="left:0;top:95px;width:348px;height:1px;background:#b0b0b0;"></div>
<div class="abs" style="left:0;top:110px;width:348px;height:1px;background:#fbfbfb;"></div>
<div class="abs" style="left:2px;top:74px;width:48px;height:21px;border:1px solid #c6c6c6;border-bottom:none;box-sizing:border-box;background:#f0f0f0;"></div>
<div class="abs" style="left:50px;top:72px;width:72px;height:24px;border:1px solid #c6c6c6;border-bottom:none;box-sizing:border-box;background:#fff;"></div>
<div class="abs lbl" style="left:10.600px;top:79px;"><span class="sx" style="transform-origin:0 50%;transform:scaleX(.965);">Model</span></div>
<div class="abs lbl" style="left:83.600px;top:78.500px;"><span class="sx" style="transform-origin:0 50%;transform:scaleX(.95);">Tasks</span></div>
<svg class="abs" style="left:63px;top:74px;" width="18" height="18"><path d="M2.200,5 L6.400,1.800 L15.600,11.200 L12,14.400 Z" fill="#27497a" stroke="#16294a" stroke-width="0.600"/><path d="M12,14.400 L15.600,11.200 L16.800,15.800 Z" fill="#e8e0d0" stroke="#555" stroke-width="0.500"/><path d="M15.600,14.200 L16.800,15.800 L14.800,15.400 Z" fill="#222"/></svg>
<div class="abs lbl" style="left:129px;top:97.500px;width:60px;text-align:center;"><span class="sx" style="transform:scaleX(.95);">Tasks</span></div>

<div id="panel"></div>
<div id="taskbg"></div>
<!-- scrollbar -->
<div class="abs" style="left:330px;top:112px;width:17px;height:585px;background:#f0f0f0;"></div>
<div class="abs" style="left:331px;top:129px;width:15px;height:562px;background:#cdcdcd;"></div>
<svg class="abs" style="left:330px;top:112px;" width="17" height="17"><path d="M5,10.800 L8.500,7.200 L12,10.800" fill="none" stroke="#484848" stroke-width="2.100"/></svg>
<div class="abs" style="left:347px;top:111px;width:1px;height:586px;background:#828790;"></div>
<div class="abs" style="left:0px;top:111px;width:348px;height:1px;background:#828790;"></div>
<div class="abs" style="left:0px;top:111px;width:1px;height:586px;background:#828790;"></div>
<!-- dock title icons -->
<svg class="abs" style="left:316px;top:98px;" width="32" height="12"><rect x="1.5" y="1.5" width="7" height="7" fill="none" stroke="#8a8a8a" stroke-width="1"/><line x1="1.5" y1="4" x2="8.5" y2="4" stroke="#8a8a8a"/><rect x="23.500" y="1.500" width="5" height="5" fill="#f0f0f0" stroke="#8a8a8a"/><rect x="21.5" y="3.500" width="5" height="5" fill="#f0f0f0" stroke="#8a8a8a"/></svg>
<!-- Close button -->
<div class="btn" style="left:129px;top:131px;width:72px;height:20px;"></div>
<div class="abs lbl" style="left:129px;top:134px;width:72px;text-align:center;"><span class="sx" style="transform:scaleX(.93);">Close</span></div>

<!-- Solver messages -->
<div class="grp" style="top:169px;height:74px;">
  <div class="grphead"><span class="t">Solver messages</span></div>
</div>
<svg class="abs" style="left:13px;top:172px;" width="20" height="20"><rect x="3.2" y="7.400" width="9.600" height="8.600" rx="0.8" fill="none" stroke="#c81e1e" stroke-width="1.7"/><circle cx="12.3" cy="6" r="4.200" fill="none" stroke="#c81e1e" stroke-width="1.6"/></svg>
<div class="abs lbl" style="left:22.500px;top:213px;color:#1c8a1c;letter-spacing:-0.12px;">Fully constrained</div>
<div class="btn" style="left:274px;top:208px;width:33px;height:20px;background:#dddddd;"></div>
<div class="abs" style="left:294px;top:210px;width:1px;height:16px;background:#9a9a9a;"></div>
<svg class="abs" style="left:294px;top:208px;" width="13" height="20"><path d="M3,8.500 L10.400,8.500 L6.700,12.600 Z" fill="#000"/></svg>
<svg class="abs" style="left:276px;top:209px;" width="17" height="18"><path d="M2.600,8 A5.600,5.600 0 0 1 12.600,4.600" fill="none" stroke="#4d86c6" stroke-width="2.800"/><path d="M14.800,1.600 L14.400,8.200 L8.600,5.600 Z" fill="#4d86c6"/><path d="M14.400,10 A5.600,5.600 0 0 1 4.400,13.400" fill="none" stroke="#4d86c6" stroke-width="2.800"/><path d="M2.200,16.400 L2.600,9.800 L8.400,12.400 Z" fill="#4d86c6"/></svg>

<!-- Constraints -->
<div class="grp" style="top:251px;height:272px;">
  <div class="grphead"><span class="t">Constraints</span></div>
</div>
<svg class="abs" style="left:13px;top:254px;" width="20" height="20"><line x1="5.400" y1="14.200" x2="15.800" y2="3.800" stroke="#333" stroke-width="3"/><line x1="5.400" y1="14.200" x2="15.800" y2="3.800" stroke="#f0f0f0" stroke-width="1.300" stroke-dasharray="1.200 0.800"/><path d="M3.600,10.600 L9,5.200 M6.200,16.600 L4.200,14.600" stroke="#c81e1e" stroke-width="1.600"/><path d="M17.400,2.200 l-4.400,0.800 l3.600,3.600 Z M3.400,16.400 l0.800,-4.400 l3.600,3.600 Z" fill="#c81e1e"/><path d="M10.200,16 h6.400 l-2.200,-5.400 Z" fill="none" stroke="#c81e1e" stroke-width="1.400"/></svg>
<div class="cb" style="left:23px;top:293px;"></div>
<div class="btn" style="left:49px;top:290px;width:188px;height:20px;background:#cccccc;border-color:#c4c4c4;"></div>
<div class="abs lbl" style="left:49px;top:295px;width:175px;text-align:center;color:#838383;">Filters</div>
<div class="abs" style="left:223px;top:292px;width:1px;height:16px;background:#b4b4b4;"></div><div class="abs" style="left:224px;top:292px;width:1px;height:16px;background:#f4f4f4;"></div>
<svg class="abs" style="left:224px;top:290px;" width="13" height="20"><path d="M4,10 L11,10 L7.500,14 Z" fill="#ffffff"/><path d="M3.400,9.400 L10.400,9.400 L6.900,13.400 Z" fill="#a0a0a0"/></svg>
<div class="btn" style="left:245px;top:290px;width:21px;height:20px;background:#dedede;"></div>
<svg class="abs" style="left:245px;top:290px;" width="21" height="20"><path d="M2.800,10.100 Q10,2.600 17.200,10.100 Q10,17.600 2.800,10.100 Z" fill="#fdfdfd" stroke="#555" stroke-width="1"/><circle cx="10" cy="10.100" r="3.900" fill="#3f6fb4"/><circle cx="10" cy="10.100" r="2" fill="#0c1c3c"/></svg>
<div class="btn" style="left:274px;top:290px;width:33px;height:20px;background:#dedede;"></div>
<div class="abs" style="left:294px;top:292px;width:1px;height:16px;background:#9a9a9a;"></div>
<svg class="abs" style="left:294px;top:290px;" width="13" height="20"><path d="M3,8.700 L10.200,8.700 L6.600,12.700 Z" fill="#000"/></svg>
<svg class="abs tool" style="left:275px;top:291px;" width="19" height="18"><path d="M4.600,3 L13.400,14.600" stroke="#c6c6c6" stroke-width="2.400"/><path d="M3,2.600 l3,-1 l1.600,2.400 l-2,1.600 Z M12.400,13.400 l3,1.800 l-1,1.400 l-2.800,-1.600 Z" fill="#bdbdbd"/><path d="M13.600,2.600 L8.800,9.400" stroke="#9aa6b4" stroke-width="1.400"/><path d="M8.600,9 L3.800,15.200" stroke="#2f6fc0" stroke-width="3.200" stroke-linecap="round"/></svg>
<div class="list" style="left:23px;top:317px;width:283px;height:190px;"></div>
<div class="cb" style="left:28px;top:327px;"></div>
<div class="cb" style="left:28px;top:355px;"></div>
<svg class="abs" style="left:28px;top:327px;" width="13" height="13"><path d="M3,6.500 L5.500,9 L10.400,3.400" fill="none" stroke="#222" stroke-width="1.2"/></svg>
<svg class="abs" style="left:28px;top:355px;" width="13" height="13"><path d="M3,6.500 L5.500,9 L10.400,3.400" fill="none" stroke="#222" stroke-width="1.2"/></svg>
<svg class="abs" style="left:46px;top:320px;" width="26" height="26"><path d="M2.800,2.800 L8,8 M22.800,2.800 L17.600,8 M2.800,22.800 L8,17.600 M22.800,22.800 L17.600,17.600" stroke="#8a1414" stroke-width="2.600" stroke-linecap="round"/><circle cx="12.800" cy="12.800" r="3.900" fill="#d01818" stroke="#8a1414" stroke-width="0.600"/></svg>
<svg class="abs" style="left:46px;top:348px;" width="26" height="26"><circle cx="12.800" cy="13" r="8.200" fill="none" stroke="#8a1414" stroke-width="3.200"/><circle cx="12.800" cy="13" r="8.200" fill="none" stroke="#b81c1c" stroke-width="1.800"/><line x1="3.600" y1="21.600" x2="22" y2="3.600" stroke="#8a1414" stroke-width="3"/><line x1="3.600" y1="21.600" x2="22" y2="3.600" stroke="#b81c1c" stroke-width="1.600"/></svg>
<div class="abs" style="left:77.500px;top:327px;font-size:12px;">Constraint1</div>
<div class="abs" style="left:77.500px;top:355px;font-size:12px;">Constraint2 (10 mm)</div>

<!-- Elements -->
<div class="grp" style="top:531px;height:180px;">
  <div class="grphead"><span class="t">Elements</span></div>
</div>
<svg class="abs" style="left:13px;top:534px;" width="20" height="20"><line x1="4.200" y1="14.600" x2="15.600" y2="3.600" stroke="#333" stroke-width="2.200"/><line x1="4.200" y1="14.600" x2="15.600" y2="3.600" stroke="#ddd" stroke-width="0.700"/><circle cx="4.200" cy="14.600" r="1.900" fill="#d01818"/><circle cx="15.600" cy="3.600" r="1.900" fill="#d01818"/></svg>
<div class="cb" style="left:23px;top:573px;"></div>
<svg class="abs" style="left:23px;top:573px;" width="13" height="13"><path d="M3,6.500 L5.500,9 L10.400,3.400" fill="none" stroke="#222" stroke-width="1.2"/></svg>
<div class="btn" style="left:49px;top:570px;width:217px;height:20px;"></div>
<div class="abs lbl" style="left:49px;top:575px;width:204px;text-align:center;">Filters</div>
<div class="abs" style="left:253px;top:572px;width:1px;height:16px;background:#9a9a9a;"></div>
<svg class="abs" style="left:253px;top:570px;" width="13" height="20"><path d="M3,8.700 L10.200,8.700 L6.600,12.700 Z" fill="#000"/></svg>
<div class="btn" style="left:274px;top:570px;width:33px;height:20px;background:#dedede;"></div>
<div class="abs" style="left:294px;top:572px;width:1px;height:16px;background:#9a9a9a;"></div>
<svg class="abs" style="left:294px;top:570px;" width="13" height="20"><path d="M3,8.700 L10.200,8.700 L6.600,12.700 Z" fill="#000"/></svg>
<svg class="abs tool" style="left:275px;top:571px;" width="19" height="18"><path d="M4.600,3 L13.400,14.600" stroke="#c6c6c6" stroke-width="2.400"/><path d="M3,2.600 l3,-1 l1.600,2.400 l-2,1.600 Z M12.400,13.400 l3,1.800 l-1,1.400 l-2.800,-1.600 Z" fill="#bdbdbd"/><path d="M13.600,2.600 L8.800,9.400" stroke="#9aa6b4" stroke-width="1.400"/><path d="M8.600,9 L3.800,15.200" stroke="#2f6fc0" stroke-width="3.200" stroke-linecap="round"/></svg>
<div class="list" style="left:23px;top:597px;width:283px;height:110px;"></div>
<div class="cb" style="left:28.500px;top:606px;"></div>
<svg class="abs" style="left:28.500px;top:606px;" width="13" height="13"><path d="M3,6.500 L5.500,9 L10.400,3.400" fill="none" stroke="#222" stroke-width="1.2"/></svg>
<div class="cb" style="left:28.500px;top:634px;border-color:#c8c8c8;"></div>
<svg class="abs" style="left:28.500px;top:634px;" width="13" height="13"><path d="M3,6.500 L5.500,9 L10.400,3.400" fill="none" stroke="#c4c4c4" stroke-width="1.2"/></svg>
<!-- element icons -->
<svg class="abs" style="left:44px;top:598px;" width="130" height="58">
<circle cx="16" cy="14.800" r="10" fill="none" stroke="#3c7a14" stroke-width="3.400"/><circle cx="16" cy="14.800" r="10" fill="none" stroke="#86cc4a" stroke-width="1.600"/><circle cx="16" cy="14.800" r="2.500" fill="#d01818"/>
<line x1="41.400" y1="14.800" x2="54.600" y2="14.800" stroke="#333" stroke-width="2"/>
<line x1="73.400" y1="14.800" x2="86.600" y2="14.800" stroke="#333" stroke-width="2"/>
<circle cx="112.300" cy="15" r="10" fill="none" stroke="#3a3a3a" stroke-width="3.200"/><circle cx="112.300" cy="15" r="10" fill="none" stroke="#fff" stroke-width="1.400"/><circle cx="112.300" cy="15" r="2.700" fill="#6fc62c" stroke="#3c7a14" stroke-width="0.500"/>
<g id="arc1"><path d="M8,36.200 Q22.400,36.600 24.200,49.600" fill="none" stroke="#2f6a10" stroke-width="3.600"/><path d="M8,36.200 Q22.400,36.600 24.200,49.600" fill="none" stroke="#6cc030" stroke-width="2"/><circle cx="8" cy="36.200" r="2.700" fill="#d020d0"/><circle cx="8" cy="49.300" r="2.700" fill="#d020d0"/><circle cx="24.300" cy="49.600" r="2.700" fill="#d020d0"/></g>
<g><path d="M40.400,36.200 Q54.800,36.600 56,49.600" fill="none" stroke="#6a2a72" stroke-width="3.600"/><path d="M40.400,36.200 Q54.800,36.600 56,49.600" fill="none" stroke="#d8a8dc" stroke-width="1.600"/><circle cx="40.400" cy="36.200" r="2.700" fill="#d020d0"/><circle cx="40.400" cy="49.300" r="2.700" fill="#d020d0"/><circle cx="56" cy="49.600" r="2.900" fill="#6fc62c"/></g>
<g><path d="M72.200,36.200 Q86.600,36.600 88.200,49.600" fill="none" stroke="#6a2a72" stroke-width="3.600"/><path d="M72.200,36.200 Q86.600,36.600 88.200,49.600" fill="none" stroke="#d8a8dc" stroke-width="1.600"/><circle cx="72.200" cy="36.200" r="2.900" fill="#6fc62c"/><circle cx="72.200" cy="49.300" r="2.700" fill="#d020d0"/><circle cx="88.200" cy="49.600" r="2.700" fill="#d020d0"/></g>
<g><path d="M104,36.200 Q118.400,36.600 120.200,49.600" fill="none" stroke="#6a2a72" stroke-width="3.600"/><path d="M104,36.200 Q118.400,36.600 120.200,49.600" fill="none" stroke="#d8a8dc" stroke-width="1.600"/><circle cx="104" cy="36.200" r="2.700" fill="#d020d0"/><circle cx="104" cy="49.300" r="2.900" fill="#6fc62c"/><circle cx="120.200" cy="49.600" r="2.700" fill="#d020d0"/></g>
</svg>
<div class="abs" style="left:174.500px;top:607px;font-size:12px;">1-Circle</div>
<div class="abs" style="left:174.500px;top:635px;font-size:12px;">2-Arc</div>
<!-- collapse buttons -->
<svg class="abs" style="left:302px;top:173px;" width="17" height="17"><circle cx="8.300" cy="8.200" r="6.900" fill="#fcfdff" stroke="#bcc6e0" stroke-width="1"/><path d="M5.200,7.600 L8.300,4.600 L11.400,7.600 M5.200,11.600 L8.300,8.600 L11.400,11.600" fill="none" stroke="#0c3c9c" stroke-width="1.700"/></svg>
<svg class="abs" style="left:302px;top:255px;" width="17" height="17"><circle cx="8.300" cy="8.200" r="6.900" fill="#fcfdff" stroke="#bcc6e0" stroke-width="1"/><path d="M5.200,7.600 L8.300,4.600 L11.400,7.600 M5.200,11.600 L8.300,8.600 L11.400,11.600" fill="none" stroke="#0c3c9c" stroke-width="1.700"/></svg>
<svg class="abs" style="left:302px;top:535px;" width="17" height="17"><circle cx="8.300" cy="8.200" r="6.900" fill="#fcfdff" stroke="#bcc6e0" stroke-width="1"/><path d="M5.200,7.600 L8.300,4.600 L11.400,7.600 M5.200,11.600 L8.300,8.600 L11.400,11.600" fill="none" stroke="#0c3c9c" stroke-width="1.700"/></svg>


<div id="view">
<svg id="scene" width="812" height="625" viewBox="352 72 812 625" style="position:absolute;left:0;top:0;">
<defs>
<linearGradient id="gRear" gradientUnits="userSpaceOnUse" x1="622" y1="186" x2="792" y2="246">
<stop offset="0" stop-color="#2e2e2e"/><stop offset="0.22" stop-color="#666666"/><stop offset="0.47" stop-color="#989898"/><stop offset="0.75" stop-color="#929292"/><stop offset="1" stop-color="#727272"/>
</linearGradient>
<linearGradient id="gFront" gradientUnits="userSpaceOnUse" x1="552" y1="280" x2="716" y2="340">
<stop offset="0" stop-color="#2c2c2c"/><stop offset="0.22" stop-color="#626262"/><stop offset="0.5" stop-color="#9a9a9a"/><stop offset="0.78" stop-color="#929292"/><stop offset="1" stop-color="#787878"/>
</linearGradient>
<linearGradient id="gSlotL" gradientUnits="userSpaceOnUse" x1="792" y1="398" x2="866" y2="372">
<stop offset="0" stop-color="#3c3c3c"/><stop offset="0.18" stop-color="#8a8a8a"/><stop offset="0.5" stop-color="#bababa"/><stop offset="1" stop-color="#9c9c9c"/>
</linearGradient>
<linearGradient id="gSlotR" gradientUnits="userSpaceOnUse" x1="960" y1="378" x2="984" y2="372">
<stop offset="0" stop-color="#9a9a9a"/><stop offset="0.5" stop-color="#7a7a7a"/><stop offset="1" stop-color="#3c3c3c"/>
</linearGradient>
</defs>
<g stroke="#141414" stroke-width="1.8" stroke-linejoin="round" stroke-linecap="round">
<!-- rear lug front face -->
<path fill="#9a9a9a" d="M603.3,256 L603.3,233 L610,215.7 L620.5,203.7 L636,195 L655,191.6 L672,193.4 L694.4,200 L711.6,208.8 L728.8,221 L741,233 L751,245 L758,253.8 L764.5,269.3 L787.4,345.8 L722,344.1 L640,344 Z"/>
<!-- rear lug cylinder surface -->
<path fill="url(#gRear)" d="M612,213 L620,205 L636,181 L646,169 L662,160.7 L680,156.6 L700,157.6 L718.5,164 L737.5,173.6 L754.7,184.7 L770,198.5 L780.5,212.3 L787.4,224.3 L791.7,235.5 L764.5,269.3 L758,253.8 L751,245 L741,233 L728.8,221 L711.6,208.8 L694.4,200 L672,193.4 L655,191.6 L636,195 L620.5,203.7 Z"/>
<!-- rear lug right flat -->
<path fill="#767676" d="M791.7,235.5 L813.7,310.2 L787.4,345.8 L764.5,269.3 Z"/>
<!-- floor between lugs -->
<path fill="#787878" d="M722,344.1 L787.4,345.8 L741,406.3 Z"/>
<!-- top face -->
<path fill="#707070" d="M813.7,310.2 L1068.2,320.6 L968.4,452.9 L714.2,443 Z"/>
<!-- slot -->
<path fill="#9a9a9a" d="M791.7,387.8 L797,377.3 L808.4,366.9 L823.6,358.4 L840.6,354.2 L855.8,354 L958,358.4 L969.4,360.3 L978.9,365 L983.2,372.6 L980.8,381.1 L969.4,392.5 L954.2,402.9 L937.2,407.7 L920.2,408.6 L817.9,404.8 L804.6,402 L796.1,396.3 Z"/>
<path fill="url(#gSlotL)" stroke-width="1.6" d="M791.7,387.8 L797,377.3 L808.4,366.9 L823.6,358.4 L840.6,354.2 L855.8,354 L870.9,406.7 L817.9,404.8 L804.6,402 L796.1,396.3 Z"/>
<path fill="url(#gSlotR)" stroke-width="1.6" d="M958,358.4 L969.4,360.3 L978.9,365 L983.2,372.6 L980.8,381.1 L969,393.4 Z"/>
<path fill="none" d="M791.7,387.8 L797,377.3 L808.4,366.9 L823.6,358.4 L840.6,354.2 L855.8,354 L958,358.4 L969.4,360.3 L978.9,365 L983.2,372.6 L980.8,381.1 L969.4,392.5 L954.2,402.9 L937.2,407.7 L920.2,408.6 L817.9,404.8 L804.6,402 L796.1,396.3 Z"/>
<!-- front lug cylinder -->
<path fill="url(#gFront)" d="M537,312.3 L550,296.8 L563.7,276 L575.7,264 L589.5,257.2 L603.3,253.8 L627.4,254.6 L648,260.6 L665,268.4 L682.4,279.6 L694.4,291.6 L706.5,305.4 L713.4,319 L717.7,333 L691.3,367.2 L686,358.8 L679,345 L668.7,331.2 L655,316.6 L637.7,304.5 L620.5,296 L603.3,290.8 L586,289 L572.3,290 L558.5,293.4 L546.5,300 Z"/>
<!-- front lug right flat -->
<path fill="#767676" d="M691.3,367.2 L717.7,333 L741,406.3 L714.2,443 Z"/>
<!-- right side face -->
<path fill="#707070" d="M968.4,452.9 L1068.2,320.6 L1084.6,373.8 L1071,390.3 L1098.1,418.8 L998.1,550.5 L997.4,488.5 L983.9,505.8 Z"/>
<!-- front face -->
<path fill="#9a9a9a" d="M531.8,362.3 L530,343.3 L531.8,326 L537,312.3 L546.5,300 L558.5,293.4 L572.3,290 L586,289 L603.3,290.8 L620.5,296 L637.7,304.5 L655,316.6 L668.7,331.2 L679,345 L686,358.8 L691.3,367.2 L714.2,443 L968.4,452.9 L983.9,505.8 L571.1,489.9 Z"/>
<!-- base front face -->
<path fill="#bababa" d="M584.9,490.5 L983.9,505.8 L997.4,488.5 L998.1,550.5 L584.5,535.6 Z"/>
</g>
<!-- watermark -->
<text x="491.5" y="358.2" font-family="Liberation Sans, sans-serif" font-size="25.6" letter-spacing="1.5" fill="#ffffff" fill-opacity="0.17">Mechnexus.co</text>
<!-- sketch -->
<path fill="none" stroke="#cc2e6a" stroke-width="2" d="M531.8,362.3 L530,343.3 L531.8,326 L537,312.3 L546.5,300 L558.5,293.4 L572.3,290 L586,289 L603.3,290.8 L620.5,296 L637.7,304.5 L655,316.6 L668.7,331.2 L679,345 L686,358.8 L691.3,367.2"/>
<path fill="none" stroke="#111" stroke-width="1.6" stroke-dasharray="4 4" d="M531.8,362.3 L530,343.3 L531.8,326 L537,312.3 L546.5,300 L558.5,293.4 L572.3,290 L586,289 L603.3,290.8 L620.5,296 L637.7,304.5 L655,316.6 L668.7,331.2 L679,345 L686,358.8 L691.3,367.2"/>
<line x1="352" y1="527.3" x2="1164" y2="555" stroke="#e26868" stroke-width="1.5"/>
<line x1="446" y1="72" x2="633.2" y2="697" stroke="#6aee8e" stroke-width="2"/>
<ellipse cx="612" cy="365" rx="46.5" ry="32.3" transform="rotate(38 612 365)" fill="none" stroke="#1fe01f" stroke-width="2.6"/>
<ellipse cx="611.7" cy="366.6" rx="3" ry="2.2" fill="#1fe01f"/>
<line x1="494.5" y1="300.6" x2="651.5" y2="386" stroke="#ffff2a" stroke-width="2"/>
<path fill="#ffff2a" d="M652.5,386.6 L639,383.6 L642.4,377.4 Z"/>
<path fill="#ffff2a" d="M577.8,345.9 L586.4,346.8 L583.6,352.2 Z"/>
<circle cx="531.8" cy="362.3" r="3.4" fill="#cc2e6a"/>
<circle cx="691.3" cy="367.2" r="3.6" fill="#cc2e6a"/>
<circle cx="691.3" cy="367" r="1.2" fill="#2a1020"/>
<circle cx="583.8" cy="536.2" r="2.6" fill="#2a80ff"/>
<text transform="translate(434.6,273) rotate(29.8)" font-family="Liberation Sans, sans-serif" font-size="13.6" letter-spacing="1.6" fill="#ffff2a">Ø10 mm</text>
<path fill="#000" d="M766.5,693.5 L766.5,697 L770,697 Z"/>

</svg>
</div>
</body>
</html>
